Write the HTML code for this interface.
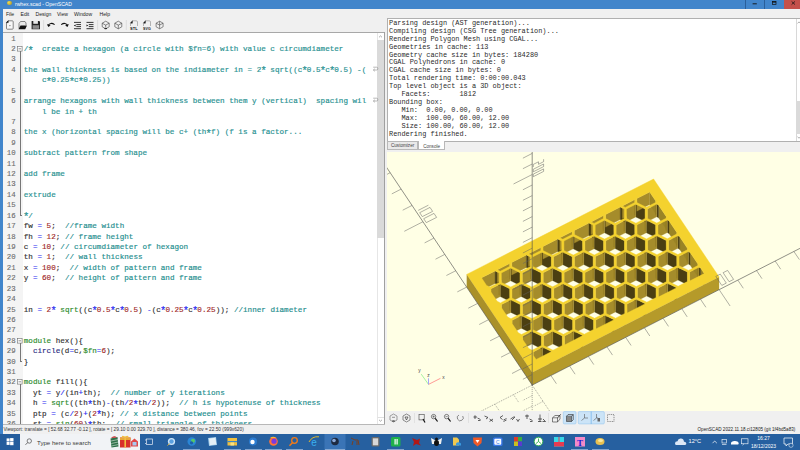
<!DOCTYPE html><html><head><meta charset="utf-8"><style>
*{margin:0;padding:0;box-sizing:border-box}
html,body{width:800px;height:450px;overflow:hidden;background:#f0f0f0;font-family:"Liberation Sans",sans-serif}
.a{position:absolute}
.mono{font-family:"Liberation Mono",monospace;white-space:pre}
#title{left:0;top:0;width:800px;height:9px;background:#4185cb}
#lstrip{left:0;top:9px;width:3px;height:425px;background:#4185cb}
#menu{left:3px;top:9px;width:797px;height:9px;background:#f0f0f0}
.mi{position:absolute;top:11.2px;font-size:5.1px;color:#1a1a1a;line-height:6px}
#editor{left:3px;top:31.8px;width:382px;height:392.5px;background:#fff;border-top:0.9px solid #a8a8a8;overflow:hidden}
#gutter{left:0;top:0;width:19.5px;height:392px;background:#f4f4f4}
.ln{position:absolute;text-align:right;font-family:"Liberation Mono",monospace;font-size:7.4px;color:#6a6a6a;line-height:8px;-webkit-text-stroke:0.1px #6a6a6a}
.cl{position:absolute;left:20.75px;font-family:"Liberation Mono",monospace;font-size:7.62px;line-height:8px;white-space:pre;color:#303030;-webkit-text-stroke:0.15px currentColor}
.cm{color:#208c8c}
.cb{color:#2a9292;-webkit-text-stroke:0.18px #2a9292}
.op{color:#2a2af0}
.st{display:inline-block;width:4.571px;font-size:10.5px;line-height:0;position:relative;top:2.6px;text-indent:-0.8px;overflow:visible}
.nu{color:#a02828}
.kw{color:#2a8a2a}
.fn{color:#2a2a80}
#console{left:387px;top:18px;width:413px;height:123.5px;background:#fff;border:0.8px solid #b0b0b0;border-right:none;overflow:hidden}
.co{position:absolute;left:1.0px;font-family:"Liberation Mono",monospace;font-size:6.92px;line-height:8px;white-space:pre;color:#2a2a2a}
#view{left:387px;top:151.7px;width:413px;height:259.3px;background:#ffffe5;overflow:hidden}
#status{left:3px;top:424.5px;width:797px;height:9.5px;background:#f0f0f0}
#taskbar{left:0;top:434px;width:800px;height:16px;background:#2660a0}
</style></head><body><div id="title" class="a"></div>
<div class="a" style="left:6.8px;top:0.6px;width:5.6px;height:4.4px;border-radius:2px;background:radial-gradient(circle at 35% 35%,#f0dc50,#a08a28)"></div>
<div class="a" style="left:15px;top:1.2px;font-size:5.1px;line-height:6px;color:#fff;white-space:pre">rwhex.scad - OpenSCAD</div>
<div class="a" style="left:745px;top:0;width:0.7px;height:9px;background:#2a5f9a"></div>
<div class="a" style="left:764.2px;top:0;width:0.7px;height:9px;background:#2a5f9a"></div>
<div class="a" style="left:784px;top:0;width:16px;height:9px;background:#c4504a"></div>
<svg class="a" style="left:745px;top:0" width="55" height="9" viewBox="745 0 55 9"><path d="M752.6,3.8 H756.8" stroke="#111" stroke-width="0.9"/><rect x="772.4" y="1.6" width="3.6" height="2.8" fill="none" stroke="#111" stroke-width="0.7"/><path d="M772.4,2 H776" stroke="#111" stroke-width="1.1"/><path d="M791.6,1.4 L795,4.6 M795,1.4 L791.6,4.6" stroke="#111" stroke-width="0.75"/></svg>
<div id="lstrip" class="a"></div>
<div id="menu" class="a"></div>
<div class="mi" style="left:6px">File</div>
<div class="mi" style="left:20.5px">Edit</div>
<div class="mi" style="left:35.5px">Design</div>
<div class="mi" style="left:57px">View</div>
<div class="mi" style="left:74px">Window</div>
<div class="mi" style="left:99.5px">Help</div>
<svg class="a" style="left:0;top:16px" width="170" height="16" viewBox="0 16 170 16">
<g fill="none" stroke-linejoin="round">
<path d="M8,20.8 H12.3 Q13.2,20.8 13.2,21.7 V28.4 Q13.2,29.2 12.3,29.2 H7.2 Q6.5,29.2 6.5,28.4 V22.4 Z" stroke="#6a6a6a" stroke-width="0.8" fill="#f8f8f8"/>
<path d="M6.5,22.6 L8.2,20.8 V22.6 Z" fill="#111" stroke="#111" stroke-width="0.6"/>
<circle cx="9.9" cy="25.6" r="0.7" fill="#777"/>
<path d="M19,28.5 V23.5 L20.5,21.5 H25 L26,23 V25" stroke="#6a6a6a" stroke-width="0.8" fill="#e8e8e8"/>
<path d="M18.5,29.2 L20.5,25.5 H27 L25.2,29.2 Z" fill="#111"/>
<path d="M31.6,21 H39.2 L40,21.8 V29.3 H31.6 Z" fill="#222"/>
<rect x="33.3" y="21" width="4.6" height="2.8" fill="#e8e8e8"/>
<rect x="32.6" y="25.2" width="6.5" height="3.6" fill="#8a8a8a"/>
<path d="M43.6,20 V30" stroke="#d0d0d0" stroke-width="0.6"/>
<path d="M48,25.6 Q50.5,21.8 54.6,24.6" stroke="#111" stroke-width="1.1"/>
<path d="M47,24 L48.3,26.9 L50.6,25.4 Z" fill="#111"/>
<path d="M67.8,25.6 Q65.3,21.8 61.2,24.6" stroke="#111" stroke-width="1.1"/>
<path d="M68.8,24 L67.5,26.9 L65.2,25.4 Z" fill="#111"/>
<path d="M74,22.4 H81 M76.3,24.6 H81 M76.3,26.6 H81 M74,28.7 H81" stroke="#222" stroke-width="0.9"/>
<path d="M73.8,25.6 L75.6,24.6 V26.6 Z" fill="#111"/>
<path d="M86.5,22.4 H93.5 M88.8,24.6 H93.5 M88.8,26.6 H93.5 M86.5,28.7 H93.5" stroke="#222" stroke-width="0.9"/>
<path d="M88.3,25.6 L86.5,24.6 V26.6 Z" fill="#111"/>
<path d="M97.6,20 V30" stroke="#d0d0d0" stroke-width="0.6"/>
<path d="M105.7,21.2 L109.2,23.2 V26.8 L105.7,28.8 L102.2,26.8 V23.2 Z M102.2,23.2 L105.7,25.1 L109.2,23.2 M105.7,25.1 V27.6" stroke="#3a3a3a" stroke-width="0.6"/>
<path d="M104.4,28.6 H107" stroke="#111" stroke-width="0.9"/>
<path d="M118.3,21.2 L121.8,23.2 V26.8 L118.3,28.8 L114.8,26.8 V23.2 Z M114.8,23.2 L118.3,25.1 L121.8,23.2 M118.3,25.1 V28.8" stroke="#3a3a3a" stroke-width="0.6"/>
<path d="M126.3,20 V30" stroke="#d0d0d0" stroke-width="0.6"/>
<path d="M132,20.8 H136.3 Q137.5,20.8 137.5,22 V26" stroke="#888" stroke-width="0.6"/>
<path d="M130.3,23.2 L132.4,20.8 V23.2 Z" fill="#111" stroke="#111" stroke-width="0.4"/>
<path d="M130.5,23.5 V26" stroke="#888" stroke-width="0.6"/>
<text x="130.1" y="29.5" font-family="Liberation Sans" font-size="3.4" font-weight="bold" fill="#111" textLength="7.6" lengthAdjust="spacingAndGlyphs">STL</text>
<path d="M145,20.8 H149.3 Q150.5,20.8 150.5,22 V26" stroke="#888" stroke-width="0.6"/>
<path d="M143.3,23.2 L145.4,20.8 V23.2 Z" fill="#111" stroke="#111" stroke-width="0.4"/>
<path d="M143.5,23.5 V26" stroke="#888" stroke-width="0.6"/>
<text x="143.1" y="29.5" font-family="Liberation Sans" font-size="3.4" font-weight="bold" fill="#111" textLength="7.6" lengthAdjust="spacingAndGlyphs">SVG</text>
<path d="M159.6,21.2 L163.1,23.2 V26.8 L159.6,28.8 L156.1,26.8 V23.2 Z M156.1,23.2 L159.6,25.1 L163.1,23.2 M159.6,21.2 V28.8" stroke="#444" stroke-width="0.6"/>
</g></svg>
<div id="editor" class="a">
<div id="gutter" class="a"></div>
</div>
<div class="a" style="left:3px;top:32.5px;width:374px;height:392px;overflow:hidden">
<div class="ln" style="left:0;top:2.10px;width:12.7px">1</div>
<div class="cl" style="top:2.10px"></div>
<div class="ln" style="left:0;top:12.52px;width:12.7px">2</div>
<div class="cl" style="top:12.52px"><span class="cb">/<span class="st">*</span>  create a hexagon (a circle with $fn=6) with value c circumdiameter</span></div>
<div class="ln" style="left:0;top:22.94px;width:12.7px">3</div>
<div class="cl" style="top:22.94px"></div>
<div class="ln" style="left:0;top:33.36px;width:12.7px">4</div>
<div class="cl" style="top:33.36px"><span class="cb">the wall thickness is based on the indiameter in = 2<span class="st">*</span> sqrt((c<span class="st">*</span>0.5<span class="st">*</span>c<span class="st">*</span>0.5) -( </span></div>
<div class="cl" style="top:43.78px"><span class="cb">    c<span class="st">*</span>0.25<span class="st">*</span>c<span class="st">*</span>0.25))</span></div>
<div class="ln" style="left:0;top:54.20px;width:12.7px">5</div>
<div class="cl" style="top:54.20px"></div>
<div class="ln" style="left:0;top:64.62px;width:12.7px">6</div>
<div class="cl" style="top:64.62px"><span class="cb">arrange hexagons with wall thickness between them y (vertical)  spacing wil</span></div>
<div class="cl" style="top:75.04px"><span class="cb">    l be in + th</span></div>
<div class="ln" style="left:0;top:85.46px;width:12.7px">7</div>
<div class="cl" style="top:85.46px"></div>
<div class="ln" style="left:0;top:95.88px;width:12.7px">8</div>
<div class="cl" style="top:95.88px"><span class="cb">the x (horizontal spacing will be c+ (th<span class="st">*</span>f) (f is a factor...</span></div>
<div class="ln" style="left:0;top:106.30px;width:12.7px">9</div>
<div class="cl" style="top:106.30px"></div>
<div class="ln" style="left:0;top:116.72px;width:12.7px">10</div>
<div class="cl" style="top:116.72px"><span class="cb">subtract pattern from shape</span></div>
<div class="ln" style="left:0;top:127.14px;width:12.7px">11</div>
<div class="cl" style="top:127.14px"></div>
<div class="ln" style="left:0;top:137.56px;width:12.7px">12</div>
<div class="cl" style="top:137.56px"><span class="cb">add frame</span></div>
<div class="ln" style="left:0;top:147.98px;width:12.7px">13</div>
<div class="cl" style="top:147.98px"></div>
<div class="ln" style="left:0;top:158.40px;width:12.7px">14</div>
<div class="cl" style="top:158.40px"><span class="cb">extrude</span></div>
<div class="ln" style="left:0;top:168.82px;width:12.7px">15</div>
<div class="cl" style="top:168.82px"></div>
<div class="ln" style="left:0;top:179.24px;width:12.7px">16</div>
<div class="cl" style="top:179.24px"><span class="cb"><span class="st">*</span>/</span></div>
<div class="ln" style="left:0;top:189.66px;width:12.7px">17</div>
<div class="cl" style="top:189.66px">fw <span class="op">=</span> <span class="nu">5</span>;  <span class="cm">//frame width</span></div>
<div class="ln" style="left:0;top:200.08px;width:12.7px">18</div>
<div class="cl" style="top:200.08px">fh <span class="op">=</span> <span class="nu">12</span>; <span class="cm">// frame height</span></div>
<div class="ln" style="left:0;top:210.50px;width:12.7px">19</div>
<div class="cl" style="top:210.50px">c <span class="op">=</span> <span class="nu">10</span>; <span class="cm">// circumdiameter of hexagon</span></div>
<div class="ln" style="left:0;top:220.92px;width:12.7px">20</div>
<div class="cl" style="top:220.92px">th <span class="op">=</span> <span class="nu">1</span>;  <span class="cm">// wall thickness</span></div>
<div class="ln" style="left:0;top:231.34px;width:12.7px">21</div>
<div class="cl" style="top:231.34px">x <span class="op">=</span> <span class="nu">100</span>;  <span class="cm">// width of pattern and frame</span></div>
<div class="ln" style="left:0;top:241.76px;width:12.7px">22</div>
<div class="cl" style="top:241.76px">y <span class="op">=</span> <span class="nu">60</span>;  <span class="cm">// height of pattern and frame</span></div>
<div class="ln" style="left:0;top:252.18px;width:12.7px">23</div>
<div class="cl" style="top:252.18px"></div>
<div class="ln" style="left:0;top:262.60px;width:12.7px">24</div>
<div class="cl" style="top:262.60px"></div>
<div class="ln" style="left:0;top:273.02px;width:12.7px">25</div>
<div class="cl" style="top:273.02px">in <span class="op">=</span> <span class="nu">2</span><span class="op"><span class="st">*</span></span> <span class="kw">sqrt</span>((c<span class="op"><span class="st">*</span></span><span class="nu">0.5</span><span class="op"><span class="st">*</span></span>c<span class="op"><span class="st">*</span></span><span class="nu">0.5</span>) <span class="op">-</span>(c<span class="op"><span class="st">*</span></span><span class="nu">0.25</span><span class="op"><span class="st">*</span></span>c<span class="op"><span class="st">*</span></span><span class="nu">0.25</span>)); <span class="cm">//inner diameter</span></div>
<div class="ln" style="left:0;top:283.44px;width:12.7px">26</div>
<div class="cl" style="top:283.44px"></div>
<div class="ln" style="left:0;top:293.86px;width:12.7px">27</div>
<div class="cl" style="top:293.86px"></div>
<div class="ln" style="left:0;top:304.28px;width:12.7px">28</div>
<div class="cl" style="top:304.28px"><span class="kw">module</span> hex(){</div>
<div class="ln" style="left:0;top:314.70px;width:12.7px">29</div>
<div class="cl" style="top:314.70px">  <span class="fn">circle</span>(d<span class="op">=</span>c,<span class="kw">$fn</span><span class="op">=</span><span class="nu">6</span>);</div>
<div class="ln" style="left:0;top:325.12px;width:12.7px">30</div>
<div class="cl" style="top:325.12px">}</div>
<div class="ln" style="left:0;top:335.54px;width:12.7px">31</div>
<div class="cl" style="top:335.54px"></div>
<div class="ln" style="left:0;top:345.96px;width:12.7px">32</div>
<div class="cl" style="top:345.96px"><span class="kw">module</span> fill(){</div>
<div class="ln" style="left:0;top:356.38px;width:12.7px">33</div>
<div class="cl" style="top:356.38px">  yt <span class="op">=</span> y<span class="op">/</span>(in<span class="op">+</span>th);  <span class="cm">// number of y iterations</span></div>
<div class="ln" style="left:0;top:366.80px;width:12.7px">34</div>
<div class="cl" style="top:366.80px">  h <span class="op">=</span> <span class="kw">sqrt</span>((th<span class="op"><span class="st">*</span></span>th)<span class="op">-</span>(th<span class="op">/</span><span class="nu">2</span><span class="op"><span class="st">*</span></span>th<span class="op">/</span><span class="nu">2</span>));  <span class="cm">// h is hypotenuse of thickness</span></div>
<div class="ln" style="left:0;top:377.22px;width:12.7px">35</div>
<div class="cl" style="top:377.22px">  ptp <span class="op">=</span> (c<span class="op">/</span><span class="nu">2</span>)<span class="op">+</span>(<span class="nu">2</span><span class="op"><span class="st">*</span></span>h); <span class="cm">// x distance between points</span></div>
<div class="ln" style="left:0;top:387.64px;width:12.7px">36</div>
<div class="cl" style="top:387.64px">  st <span class="op">=</span> <span class="kw">sin</span>(<span class="nu">60</span>)<span class="op"><span class="st">*</span></span>th;  <span class="cm">// small triangle of thickness</span></div>
</div>
<svg class="a" style="left:17.3px;top:45.92px" width="6" height="6" viewBox="0 0 6 6"><rect x="0.5" y="0.5" width="4.6" height="4.6" fill="#fff" stroke="#6c6c6c" stroke-width="0.6"/><path d="M1.5,2.8 H4.1" stroke="#333" stroke-width="0.55"/></svg>
<div class="a" style="left:19.6px;top:51.02px;width:0.7px;height:164.42px;background:#777"></div>
<div class="a" style="left:19.6px;top:215.44px;width:2.6px;height:0.7px;background:#777"></div>
<svg class="a" style="left:17.3px;top:337.68px" width="6" height="6" viewBox="0 0 6 6"><rect x="0.5" y="0.5" width="4.6" height="4.6" fill="#fff" stroke="#6c6c6c" stroke-width="0.6"/><path d="M1.5,2.8 H4.1" stroke="#333" stroke-width="0.55"/></svg>
<div class="a" style="left:19.6px;top:342.78px;width:0.7px;height:18.54px;background:#777"></div>
<div class="a" style="left:19.6px;top:361.32px;width:2.6px;height:0.7px;background:#777"></div>
<svg class="a" style="left:17.3px;top:379.36px" width="6" height="6" viewBox="0 0 6 6"><rect x="0.5" y="0.5" width="4.6" height="4.6" fill="#fff" stroke="#6c6c6c" stroke-width="0.6"/><path d="M1.5,2.8 H4.1" stroke="#333" stroke-width="0.55"/></svg>
<div class="a" style="left:19.6px;top:384.46px;width:0.7px;height:40.54px;background:#777"></div>
<div class="a" style="left:377.3px;top:32.7px;width:7px;height:391.5px;background:#fff;border-left:0.6px solid #e6e6e6"></div>
<div class="a" style="left:377.3px;top:39.5px;width:7px;height:198.8px;background:#dadada"></div>
<div class="a" style="left:384.3px;top:32.3px;width:1px;height:392px;background:#a0a0a0"></div>
<svg class="a" style="left:372px;top:66.06px" width="7" height="7" viewBox="0 0 7 7"><path d="M1.2,1.2 H4.6 Q5.8,1.2 5.8,2.6 Q5.8,4 4.6,4 H1.6 M2.8,2.8 L1.3,4 L2.8,5.3" fill="none" stroke="#8a8a8a" stroke-width="0.6"/></svg>
<svg class="a" style="left:372px;top:97.32px" width="7" height="7" viewBox="0 0 7 7"><path d="M1.2,1.2 H4.6 Q5.8,1.2 5.8,2.6 Q5.8,4 4.6,4 H1.6 M2.8,2.8 L1.3,4 L2.8,5.3" fill="none" stroke="#8a8a8a" stroke-width="0.6"/></svg>
<svg class="a" style="left:377.3px;top:32.7px" width="7" height="7" viewBox="0 0 7 7"><path d="M2,4.3 L3.5,2.9 L5,4.3" fill="none" stroke="#777" stroke-width="0.6"/></svg>
<div class="a" style="left:377.3px;top:417px;width:7px;height:7.2px;background:#fff;border-top:0.6px solid #e0e0e0;border-left:0.6px solid #e6e6e6"></div>
<svg class="a" style="left:377.3px;top:417px" width="7" height="7" viewBox="0 0 7 7"><path d="M2,2.8 L3.5,4.2 L5,2.8" fill="none" stroke="#777" stroke-width="0.6"/></svg>
<div class="a" style="left:3px;top:424px;width:382px;height:0.7px;background:#b8b8b8"></div>
<div id="console" class="a">
<div class="co" style="top:-0.20px">Parsing design (AST generation)...</div>
<div class="co" style="top:7.73px">Compiling design (CSG Tree generation)...</div>
<div class="co" style="top:15.66px">Rendering Polygon Mesh using CGAL...</div>
<div class="co" style="top:23.59px">Geometries in cache: 113</div>
<div class="co" style="top:31.52px">Geometry cache size in bytes: 184280</div>
<div class="co" style="top:39.45px">CGAL Polyhedrons in cache: 0</div>
<div class="co" style="top:47.38px">CGAL cache size in bytes: 0</div>
<div class="co" style="top:55.31px">Total rendering time: 0:00:00.043</div>
<div class="co" style="top:63.24px">Top level object is a 3D object:</div>
<div class="co" style="top:71.17px">   Facets:       1812</div>
<div class="co" style="top:79.10px">Bounding box:</div>
<div class="co" style="top:87.03px">   Min:  0.00, 0.00, 0.00</div>
<div class="co" style="top:94.96px">   Max:  100.00, 60.00, 12.00</div>
<div class="co" style="top:102.89px">   Size: 100.00, 60.00, 12.00</div>
<div class="co" style="top:110.82px">Rendering finished.</div>
</div>
<div class="a" style="left:795.5px;top:18.6px;width:4.5px;height:122px;background:#fff;border-left:0.6px solid #d8d8d8"></div>
<div class="a" style="left:795.8px;top:100.6px;width:4.2px;height:33px;background:#dadada"></div>
<svg class="a" style="left:795.5px;top:18.6px" width="5" height="7" viewBox="0 0 5 7"><path d="M1.5,4.3 L3,2.9 L4.5,4.3" fill="none" stroke="#777" stroke-width="0.6"/></svg>
<svg class="a" style="left:795.5px;top:133.8px" width="5" height="7" viewBox="0 0 5 7"><path d="M1.5,2.8 L3,4.2 L4.5,2.8" fill="none" stroke="#777" stroke-width="0.6"/></svg>
<div class="a" style="left:387.2px;top:141.3px;width:31px;height:8.3px;background:#e9e9e9;border:0.6px solid #b8b8b8"></div>
<div class="a" style="left:391px;top:143.3px;font-size:4.6px;line-height:5px;color:#444">Customizer</div>
<div class="a" style="left:418.2px;top:141.3px;width:26.7px;height:9.1px;background:#fff;border:0.6px solid #b8b8b8;border-top:none"></div>
<div class="a" style="left:423.2px;top:143.9px;font-size:4.6px;line-height:5px;color:#444">Console</div>
<div id="view" class="a"></div>
<svg class="a" style="left:387px;top:152px" width="413" height="259" viewBox="0 0 413 259">
<polygon points="164.6,199.6 155.5,195.1 155.5,207.7 164.6,212.2" fill="#4b3f12" stroke="#4b3f12" stroke-width="0.3"/>
<polygon points="155.5,195.1 146.2,199.9 146.2,212.5 155.5,207.7" fill="#a58c2b" stroke="#a58c2b" stroke-width="0.3"/>
<polygon points="154.4,193.5 154.4,184.0 154.4,196.7 154.4,206.1" fill="#8a7420" stroke="#8a7420" stroke-width="0.3"/>
<polygon points="154.4,184.0 145.0,179.3 145.0,192.0 154.4,196.7" fill="#4b3f12" stroke="#4b3f12" stroke-width="0.3"/>
<polygon points="145.0,179.3 135.6,184.1 135.6,196.7 145.0,192.0" fill="#a58c2b" stroke="#a58c2b" stroke-width="0.3"/>
<polygon points="143.9,177.7 143.8,168.2 143.8,180.9 143.9,190.3" fill="#8a7420" stroke="#8a7420" stroke-width="0.3"/>
<polygon points="143.8,168.2 134.4,163.6 134.4,176.2 143.8,180.9" fill="#4b3f12" stroke="#4b3f12" stroke-width="0.3"/>
<polygon points="134.4,163.6 125.1,168.3 125.1,181.0 134.4,176.2" fill="#a58c2b" stroke="#a58c2b" stroke-width="0.3"/>
<polygon points="133.3,161.9 133.3,152.5 133.3,165.1 133.3,174.6" fill="#8a7420" stroke="#8a7420" stroke-width="0.3"/>
<polygon points="133.3,152.5 123.9,147.8 123.9,160.4 133.3,165.1" fill="#4b3f12" stroke="#4b3f12" stroke-width="0.3"/>
<polygon points="123.9,147.8 114.5,152.5 114.5,165.2 123.9,160.4" fill="#a58c2b" stroke="#a58c2b" stroke-width="0.3"/>
<polygon points="122.8,146.1 122.7,136.7 122.7,149.3 122.8,158.8" fill="#8a7420" stroke="#8a7420" stroke-width="0.3"/>
<polygon points="122.7,136.7 113.3,132.0 113.3,144.6 122.7,149.3" fill="#4b3f12" stroke="#4b3f12" stroke-width="0.3"/>
<polygon points="113.3,132.0 104.0,136.8 104.0,149.4 113.3,144.6" fill="#a58c2b" stroke="#a58c2b" stroke-width="0.3"/>
<polygon points="108.1,118.9 94.5,125.8 94.5,138.5 108.1,131.5" fill="#a58c2b" stroke="#a58c2b" stroke-width="0.3"/>
<polygon points="112.2,130.4 112.2,120.9 112.2,133.5 112.2,143.0" fill="#8a7420" stroke="#8a7420" stroke-width="0.3"/>
<polygon points="112.2,120.9 108.1,118.9 108.1,131.5 112.2,133.5" fill="#4b3f12" stroke="#4b3f12" stroke-width="0.3"/>
<polygon points="175.3,183.9 165.9,179.2 165.9,191.9 175.3,196.6" fill="#4b3f12" stroke="#4b3f12" stroke-width="0.3"/>
<polygon points="165.9,179.2 156.5,184.0 156.5,196.6 165.9,191.9" fill="#a58c2b" stroke="#a58c2b" stroke-width="0.3"/>
<polygon points="175.4,193.4 175.3,183.9 175.3,196.6 175.4,206.0" fill="#8a7420" stroke="#8a7420" stroke-width="0.3"/>
<polygon points="164.7,168.1 155.3,163.5 155.3,176.1 164.7,180.8" fill="#4b3f12" stroke="#4b3f12" stroke-width="0.3"/>
<polygon points="155.3,163.5 146.0,168.2 146.0,180.9 155.3,176.1" fill="#a58c2b" stroke="#a58c2b" stroke-width="0.3"/>
<polygon points="164.8,177.6 164.7,168.1 164.7,180.8 164.8,190.2" fill="#8a7420" stroke="#8a7420" stroke-width="0.3"/>
<polygon points="154.2,152.4 144.8,147.7 144.8,160.3 154.2,165.0" fill="#4b3f12" stroke="#4b3f12" stroke-width="0.3"/>
<polygon points="144.8,147.7 135.4,152.5 135.4,165.1 144.8,160.3" fill="#a58c2b" stroke="#a58c2b" stroke-width="0.3"/>
<polygon points="154.2,161.8 154.2,152.4 154.2,165.0 154.2,174.5" fill="#8a7420" stroke="#8a7420" stroke-width="0.3"/>
<polygon points="143.6,136.6 134.2,131.9 134.2,144.5 143.6,149.2" fill="#4b3f12" stroke="#4b3f12" stroke-width="0.3"/>
<polygon points="134.2,131.9 124.9,136.7 124.9,149.3 134.2,144.5" fill="#a58c2b" stroke="#a58c2b" stroke-width="0.3"/>
<polygon points="143.7,146.0 143.6,136.6 143.6,149.2 143.7,158.7" fill="#8a7420" stroke="#8a7420" stroke-width="0.3"/>
<polygon points="133.1,120.8 123.7,116.1 123.7,128.8 133.1,133.4" fill="#4b3f12" stroke="#4b3f12" stroke-width="0.3"/>
<polygon points="123.7,116.1 114.3,120.9 114.3,133.5 123.7,128.8" fill="#a58c2b" stroke="#a58c2b" stroke-width="0.3"/>
<polygon points="133.1,130.3 133.1,120.8 133.1,133.4 133.1,142.9" fill="#8a7420" stroke="#8a7420" stroke-width="0.3"/>
<polygon points="122.6,111.5 110.3,117.8 110.3,130.4 122.6,124.1" fill="#a58c2b" stroke="#a58c2b" stroke-width="0.3"/>
<polygon points="122.6,114.5 122.6,111.5 122.6,124.1 122.6,127.1" fill="#8a7420" stroke="#8a7420" stroke-width="0.3"/>
<polygon points="195.8,183.6 186.8,179.1 186.8,191.8 195.8,196.3" fill="#4b3f12" stroke="#4b3f12" stroke-width="0.3"/>
<polygon points="186.8,179.1 177.5,183.9 177.5,196.5 186.8,191.8" fill="#a58c2b" stroke="#a58c2b" stroke-width="0.3"/>
<polygon points="185.7,168.0 176.3,163.4 176.3,176.0 185.7,180.7" fill="#4b3f12" stroke="#4b3f12" stroke-width="0.3"/>
<polygon points="176.3,163.4 166.9,168.1 166.9,180.8 176.3,176.0" fill="#a58c2b" stroke="#a58c2b" stroke-width="0.3"/>
<polygon points="185.7,177.5 185.7,168.0 185.7,180.7 185.7,190.1" fill="#8a7420" stroke="#8a7420" stroke-width="0.3"/>
<polygon points="175.1,152.3 165.7,147.6 165.7,160.2 175.1,164.9" fill="#4b3f12" stroke="#4b3f12" stroke-width="0.3"/>
<polygon points="165.7,147.6 156.4,152.4 156.4,165.0 165.7,160.2" fill="#a58c2b" stroke="#a58c2b" stroke-width="0.3"/>
<polygon points="175.2,161.7 175.1,152.3 175.1,164.9 175.2,174.4" fill="#8a7420" stroke="#8a7420" stroke-width="0.3"/>
<polygon points="164.6,136.5 155.1,131.8 155.1,144.4 164.6,149.1" fill="#4b3f12" stroke="#4b3f12" stroke-width="0.3"/>
<polygon points="155.1,131.8 145.8,136.6 145.8,149.2 155.1,144.4" fill="#a58c2b" stroke="#a58c2b" stroke-width="0.3"/>
<polygon points="164.6,145.9 164.6,136.5 164.6,149.1 164.6,158.6" fill="#8a7420" stroke="#8a7420" stroke-width="0.3"/>
<polygon points="154.0,120.7 144.6,116.0 144.6,128.7 154.0,133.3" fill="#4b3f12" stroke="#4b3f12" stroke-width="0.3"/>
<polygon points="144.6,116.0 135.3,120.8 135.3,133.4 144.6,128.7" fill="#a58c2b" stroke="#a58c2b" stroke-width="0.3"/>
<polygon points="154.1,130.2 154.0,120.7 154.0,133.3 154.1,142.8" fill="#8a7420" stroke="#8a7420" stroke-width="0.3"/>
<polygon points="139.4,102.9 124.7,110.4 124.7,123.0 139.4,115.5" fill="#a58c2b" stroke="#a58c2b" stroke-width="0.3"/>
<polygon points="143.5,114.4 143.4,104.9 143.4,117.6 143.5,127.0" fill="#8a7420" stroke="#8a7420" stroke-width="0.3"/>
<polygon points="143.4,104.9 139.4,102.9 139.4,115.5 143.4,117.6" fill="#4b3f12" stroke="#4b3f12" stroke-width="0.3"/>
<polygon points="206.6,168.0 197.2,163.3 197.2,175.9 206.6,180.6" fill="#4b3f12" stroke="#4b3f12" stroke-width="0.3"/>
<polygon points="197.2,163.3 187.8,168.0 187.8,180.7 197.2,175.9" fill="#a58c2b" stroke="#a58c2b" stroke-width="0.3"/>
<polygon points="206.6,177.4 206.6,168.0 206.6,180.6 206.6,190.0" fill="#8a7420" stroke="#8a7420" stroke-width="0.3"/>
<polygon points="196.0,152.2 186.6,147.5 186.6,160.1 196.0,164.8" fill="#4b3f12" stroke="#4b3f12" stroke-width="0.3"/>
<polygon points="186.6,147.5 177.3,152.3 177.3,164.9 186.6,160.1" fill="#a58c2b" stroke="#a58c2b" stroke-width="0.3"/>
<polygon points="196.1,161.6 196.0,152.2 196.0,164.8 196.1,174.3" fill="#8a7420" stroke="#8a7420" stroke-width="0.3"/>
<polygon points="185.5,136.4 176.1,131.7 176.1,144.3 185.5,149.0" fill="#4b3f12" stroke="#4b3f12" stroke-width="0.3"/>
<polygon points="176.1,131.7 166.7,136.5 166.7,149.1 176.1,144.3" fill="#a58c2b" stroke="#a58c2b" stroke-width="0.3"/>
<polygon points="185.5,145.9 185.5,136.4 185.5,149.0 185.5,158.5" fill="#8a7420" stroke="#8a7420" stroke-width="0.3"/>
<polygon points="174.9,120.6 165.5,115.9 165.5,128.6 174.9,133.3" fill="#4b3f12" stroke="#4b3f12" stroke-width="0.3"/>
<polygon points="165.5,115.9 156.2,120.7 156.2,133.3 165.5,128.6" fill="#a58c2b" stroke="#a58c2b" stroke-width="0.3"/>
<polygon points="175.0,130.1 174.9,120.6 174.9,133.3 175.0,142.7" fill="#8a7420" stroke="#8a7420" stroke-width="0.3"/>
<polygon points="164.4,104.8 155.0,100.2 155.0,112.8 164.4,117.5" fill="#4b3f12" stroke="#4b3f12" stroke-width="0.3"/>
<polygon points="155.0,100.2 145.6,104.9 145.6,117.6 155.0,112.8" fill="#a58c2b" stroke="#a58c2b" stroke-width="0.3"/>
<polygon points="164.4,114.3 164.4,104.8 164.4,117.5 164.4,126.9" fill="#8a7420" stroke="#8a7420" stroke-width="0.3"/>
<polygon points="153.8,95.5 141.5,101.8 141.5,114.4 153.8,108.2" fill="#a58c2b" stroke="#a58c2b" stroke-width="0.3"/>
<polygon points="153.9,98.5 153.8,95.5 153.8,108.2 153.9,111.2" fill="#8a7420" stroke="#8a7420" stroke-width="0.3"/>
<polygon points="227.1,167.7 218.1,163.2 218.1,175.8 227.1,180.3" fill="#4b3f12" stroke="#4b3f12" stroke-width="0.3"/>
<polygon points="218.1,163.2 208.7,167.9 208.7,180.6 218.1,175.8" fill="#a58c2b" stroke="#a58c2b" stroke-width="0.3"/>
<polygon points="216.9,152.1 207.5,147.4 207.5,160.0 216.9,164.7" fill="#4b3f12" stroke="#4b3f12" stroke-width="0.3"/>
<polygon points="207.5,147.4 198.2,152.2 198.2,164.8 207.5,160.0" fill="#a58c2b" stroke="#a58c2b" stroke-width="0.3"/>
<polygon points="217.0,161.5 216.9,152.1 216.9,164.7 217.0,174.2" fill="#8a7420" stroke="#8a7420" stroke-width="0.3"/>
<polygon points="206.4,136.3 197.0,131.6 197.0,144.2 206.4,148.9" fill="#4b3f12" stroke="#4b3f12" stroke-width="0.3"/>
<polygon points="197.0,131.6 187.6,136.4 187.6,149.0 197.0,144.2" fill="#a58c2b" stroke="#a58c2b" stroke-width="0.3"/>
<polygon points="206.4,145.8 206.4,136.3 206.4,148.9 206.4,158.4" fill="#8a7420" stroke="#8a7420" stroke-width="0.3"/>
<polygon points="195.8,120.5 186.4,115.8 186.4,128.5 195.8,133.2" fill="#4b3f12" stroke="#4b3f12" stroke-width="0.3"/>
<polygon points="186.4,115.8 177.1,120.6 177.1,133.2 186.4,128.5" fill="#a58c2b" stroke="#a58c2b" stroke-width="0.3"/>
<polygon points="195.9,130.0 195.8,120.5 195.8,133.2 195.9,142.6" fill="#8a7420" stroke="#8a7420" stroke-width="0.3"/>
<polygon points="185.3,104.7 175.9,100.1 175.9,112.7 185.3,117.4" fill="#4b3f12" stroke="#4b3f12" stroke-width="0.3"/>
<polygon points="175.9,100.1 166.5,104.8 166.5,117.5 175.9,112.7" fill="#a58c2b" stroke="#a58c2b" stroke-width="0.3"/>
<polygon points="185.3,114.2 185.3,104.7 185.3,117.4 185.3,126.8" fill="#8a7420" stroke="#8a7420" stroke-width="0.3"/>
<polygon points="170.7,86.9 156.0,94.4 156.0,107.1 170.7,99.6" fill="#a58c2b" stroke="#a58c2b" stroke-width="0.3"/>
<polygon points="174.8,98.4 174.7,89.0 174.7,101.6 174.8,111.1" fill="#8a7420" stroke="#8a7420" stroke-width="0.3"/>
<polygon points="174.7,89.0 170.7,86.9 170.7,99.6 174.7,101.6" fill="#4b3f12" stroke="#4b3f12" stroke-width="0.3"/>
<polygon points="237.8,152.0 228.4,147.3 228.4,159.9 237.8,164.6" fill="#4b3f12" stroke="#4b3f12" stroke-width="0.3"/>
<polygon points="228.4,147.3 219.1,152.1 219.1,164.7 228.4,159.9" fill="#a58c2b" stroke="#a58c2b" stroke-width="0.3"/>
<polygon points="237.9,161.4 237.8,152.0 237.8,164.6 237.9,174.1" fill="#8a7420" stroke="#8a7420" stroke-width="0.3"/>
<polygon points="227.3,136.2 217.9,131.5 217.9,144.2 227.3,148.8" fill="#4b3f12" stroke="#4b3f12" stroke-width="0.3"/>
<polygon points="217.9,131.5 208.5,136.3 208.5,148.9 217.9,144.2" fill="#a58c2b" stroke="#a58c2b" stroke-width="0.3"/>
<polygon points="227.4,145.7 227.3,136.2 227.3,148.8 227.4,158.3" fill="#8a7420" stroke="#8a7420" stroke-width="0.3"/>
<polygon points="216.7,120.4 207.3,115.7 207.3,128.4 216.7,133.1" fill="#4b3f12" stroke="#4b3f12" stroke-width="0.3"/>
<polygon points="207.3,115.7 198.0,120.5 198.0,133.1 207.3,128.4" fill="#a58c2b" stroke="#a58c2b" stroke-width="0.3"/>
<polygon points="216.8,129.9 216.7,120.4 216.7,133.1 216.8,142.5" fill="#8a7420" stroke="#8a7420" stroke-width="0.3"/>
<polygon points="206.2,104.6 196.8,100.0 196.8,112.6 206.2,117.3" fill="#4b3f12" stroke="#4b3f12" stroke-width="0.3"/>
<polygon points="196.8,100.0 187.4,104.7 187.4,117.4 196.8,112.6" fill="#a58c2b" stroke="#a58c2b" stroke-width="0.3"/>
<polygon points="206.2,114.1 206.2,104.6 206.2,117.3 206.2,126.7" fill="#8a7420" stroke="#8a7420" stroke-width="0.3"/>
<polygon points="195.6,88.9 186.2,84.2 186.2,96.8 195.6,101.5" fill="#4b3f12" stroke="#4b3f12" stroke-width="0.3"/>
<polygon points="186.2,84.2 176.9,89.0 176.9,101.6 186.2,96.8" fill="#a58c2b" stroke="#a58c2b" stroke-width="0.3"/>
<polygon points="195.7,98.3 195.6,88.9 195.6,101.5 195.7,111.0" fill="#8a7420" stroke="#8a7420" stroke-width="0.3"/>
<polygon points="185.1,79.6 172.8,85.8 172.8,98.5 185.1,92.2" fill="#a58c2b" stroke="#a58c2b" stroke-width="0.3"/>
<polygon points="185.1,82.6 185.1,79.6 185.1,92.2 185.1,95.2" fill="#8a7420" stroke="#8a7420" stroke-width="0.3"/>
<polygon points="258.4,151.7 249.4,147.2 249.4,159.8 258.4,164.3" fill="#4b3f12" stroke="#4b3f12" stroke-width="0.3"/>
<polygon points="249.4,147.2 240.0,152.0 240.0,164.6 249.4,159.8" fill="#a58c2b" stroke="#a58c2b" stroke-width="0.3"/>
<polygon points="248.2,136.1 238.8,131.4 238.8,144.1 248.2,148.7" fill="#4b3f12" stroke="#4b3f12" stroke-width="0.3"/>
<polygon points="238.8,131.4 229.5,136.2 229.5,148.8 238.8,144.1" fill="#a58c2b" stroke="#a58c2b" stroke-width="0.3"/>
<polygon points="248.3,145.6 248.2,136.1 248.2,148.7 248.3,158.2" fill="#8a7420" stroke="#8a7420" stroke-width="0.3"/>
<polygon points="237.7,120.3 228.3,115.6 228.3,128.3 237.7,133.0" fill="#4b3f12" stroke="#4b3f12" stroke-width="0.3"/>
<polygon points="228.3,115.6 218.9,120.4 218.9,133.1 228.3,128.3" fill="#a58c2b" stroke="#a58c2b" stroke-width="0.3"/>
<polygon points="237.7,129.8 237.7,120.3 237.7,133.0 237.7,142.4" fill="#8a7420" stroke="#8a7420" stroke-width="0.3"/>
<polygon points="227.1,104.6 217.7,99.9 217.7,112.5 227.1,117.2" fill="#4b3f12" stroke="#4b3f12" stroke-width="0.3"/>
<polygon points="217.7,99.9 208.4,104.6 208.4,117.3 217.7,112.5" fill="#a58c2b" stroke="#a58c2b" stroke-width="0.3"/>
<polygon points="227.2,114.0 227.1,104.6 227.1,117.2 227.2,126.6" fill="#8a7420" stroke="#8a7420" stroke-width="0.3"/>
<polygon points="216.6,88.8 207.1,84.1 207.1,96.7 216.6,101.4" fill="#4b3f12" stroke="#4b3f12" stroke-width="0.3"/>
<polygon points="207.1,84.1 197.8,88.9 197.8,101.5 207.1,96.7" fill="#a58c2b" stroke="#a58c2b" stroke-width="0.3"/>
<polygon points="216.6,98.2 216.6,88.8 216.6,101.4 216.6,110.9" fill="#8a7420" stroke="#8a7420" stroke-width="0.3"/>
<polygon points="201.9,71.0 187.3,78.5 187.3,91.1 201.9,83.6" fill="#a58c2b" stroke="#a58c2b" stroke-width="0.3"/>
<polygon points="206.1,82.5 206.0,73.0 206.0,85.6 206.1,95.1" fill="#8a7420" stroke="#8a7420" stroke-width="0.3"/>
<polygon points="206.0,73.0 201.9,71.0 201.9,83.6 206.0,85.6" fill="#4b3f12" stroke="#4b3f12" stroke-width="0.3"/>
<polygon points="269.1,136.0 259.7,131.3 259.7,144.0 269.1,148.6" fill="#4b3f12" stroke="#4b3f12" stroke-width="0.3"/>
<polygon points="259.7,131.3 250.4,136.1 250.4,148.7 259.7,144.0" fill="#a58c2b" stroke="#a58c2b" stroke-width="0.3"/>
<polygon points="269.2,145.5 269.1,136.0 269.1,148.6 269.2,158.1" fill="#8a7420" stroke="#8a7420" stroke-width="0.3"/>
<polygon points="258.6,120.2 249.2,115.5 249.2,128.2 258.6,132.9" fill="#4b3f12" stroke="#4b3f12" stroke-width="0.3"/>
<polygon points="249.2,115.5 239.8,120.3 239.8,133.0 249.2,128.2" fill="#a58c2b" stroke="#a58c2b" stroke-width="0.3"/>
<polygon points="258.6,129.7 258.6,120.2 258.6,132.9 258.6,142.3" fill="#8a7420" stroke="#8a7420" stroke-width="0.3"/>
<polygon points="248.0,104.5 238.6,99.8 238.6,112.4 248.0,117.1" fill="#4b3f12" stroke="#4b3f12" stroke-width="0.3"/>
<polygon points="238.6,99.8 229.3,104.5 229.3,117.2 238.6,112.4" fill="#a58c2b" stroke="#a58c2b" stroke-width="0.3"/>
<polygon points="248.1,113.9 248.0,104.5 248.0,117.1 248.1,126.6" fill="#8a7420" stroke="#8a7420" stroke-width="0.3"/>
<polygon points="237.5,88.7 228.1,84.0 228.1,96.6 237.5,101.3" fill="#4b3f12" stroke="#4b3f12" stroke-width="0.3"/>
<polygon points="228.1,84.0 218.7,88.8 218.7,101.4 228.1,96.6" fill="#a58c2b" stroke="#a58c2b" stroke-width="0.3"/>
<polygon points="237.5,98.1 237.5,88.7 237.5,101.3 237.5,110.8" fill="#8a7420" stroke="#8a7420" stroke-width="0.3"/>
<polygon points="226.9,72.9 217.5,68.2 217.5,80.8 226.9,85.5" fill="#4b3f12" stroke="#4b3f12" stroke-width="0.3"/>
<polygon points="217.5,68.2 208.2,73.0 208.2,85.6 217.5,80.8" fill="#a58c2b" stroke="#a58c2b" stroke-width="0.3"/>
<polygon points="227.0,82.4 226.9,72.9 226.9,85.5 227.0,95.0" fill="#8a7420" stroke="#8a7420" stroke-width="0.3"/>
<polygon points="216.4,63.6 204.1,69.9 204.1,82.5 216.4,76.2" fill="#a58c2b" stroke="#a58c2b" stroke-width="0.3"/>
<polygon points="216.4,66.6 216.4,63.6 216.4,76.2 216.4,79.2" fill="#8a7420" stroke="#8a7420" stroke-width="0.3"/>
<polygon points="289.7,135.7 280.6,131.2 280.6,143.9 289.7,148.4" fill="#4b3f12" stroke="#4b3f12" stroke-width="0.3"/>
<polygon points="280.6,131.2 271.3,136.0 271.3,148.6 280.6,143.9" fill="#a58c2b" stroke="#a58c2b" stroke-width="0.3"/>
<polygon points="279.5,120.1 270.1,115.5 270.1,128.1 279.5,132.8" fill="#4b3f12" stroke="#4b3f12" stroke-width="0.3"/>
<polygon points="270.1,115.5 260.7,120.2 260.7,132.9 270.1,128.1" fill="#a58c2b" stroke="#a58c2b" stroke-width="0.3"/>
<polygon points="279.5,129.6 279.5,120.1 279.5,132.8 279.5,142.2" fill="#8a7420" stroke="#8a7420" stroke-width="0.3"/>
<polygon points="268.9,104.4 259.5,99.7 259.5,112.3 268.9,117.0" fill="#4b3f12" stroke="#4b3f12" stroke-width="0.3"/>
<polygon points="259.5,99.7 250.2,104.4 250.2,117.1 259.5,112.3" fill="#a58c2b" stroke="#a58c2b" stroke-width="0.3"/>
<polygon points="269.0,113.8 268.9,104.4 268.9,117.0 269.0,126.5" fill="#8a7420" stroke="#8a7420" stroke-width="0.3"/>
<polygon points="258.4,88.6 249.0,83.9 249.0,96.5 258.4,101.2" fill="#4b3f12" stroke="#4b3f12" stroke-width="0.3"/>
<polygon points="249.0,83.9 239.6,88.7 239.6,101.3 249.0,96.5" fill="#a58c2b" stroke="#a58c2b" stroke-width="0.3"/>
<polygon points="258.4,98.0 258.4,88.6 258.4,101.2 258.4,110.7" fill="#8a7420" stroke="#8a7420" stroke-width="0.3"/>
<polygon points="247.8,72.8 238.4,68.1 238.4,80.8 247.8,85.4" fill="#4b3f12" stroke="#4b3f12" stroke-width="0.3"/>
<polygon points="238.4,68.1 229.1,72.9 229.1,85.5 238.4,80.8" fill="#a58c2b" stroke="#a58c2b" stroke-width="0.3"/>
<polygon points="247.9,82.3 247.8,72.8 247.8,85.4 247.9,94.9" fill="#8a7420" stroke="#8a7420" stroke-width="0.3"/>
<polygon points="233.2,55.0 218.6,62.5 218.6,75.1 233.2,67.6" fill="#a58c2b" stroke="#a58c2b" stroke-width="0.3"/>
<polygon points="237.3,66.5 237.3,57.0 237.3,69.7 237.3,79.1" fill="#8a7420" stroke="#8a7420" stroke-width="0.3"/>
<polygon points="237.3,57.0 233.2,55.0 233.2,67.6 237.3,69.7" fill="#4b3f12" stroke="#4b3f12" stroke-width="0.3"/>
<polygon points="300.4,120.0 291.0,115.4 291.0,128.0 300.4,132.7" fill="#4b3f12" stroke="#4b3f12" stroke-width="0.3"/>
<polygon points="291.0,115.4 281.6,120.1 281.6,132.8 291.0,128.0" fill="#a58c2b" stroke="#a58c2b" stroke-width="0.3"/>
<polygon points="300.5,129.5 300.4,120.0 300.4,132.7 300.5,142.1" fill="#8a7420" stroke="#8a7420" stroke-width="0.3"/>
<polygon points="289.8,104.3 280.4,99.6 280.4,112.2 289.8,116.9" fill="#4b3f12" stroke="#4b3f12" stroke-width="0.3"/>
<polygon points="280.4,99.6 271.1,104.4 271.1,117.0 280.4,112.2" fill="#a58c2b" stroke="#a58c2b" stroke-width="0.3"/>
<polygon points="289.9,113.7 289.8,104.3 289.8,116.9 289.9,126.4" fill="#8a7420" stroke="#8a7420" stroke-width="0.3"/>
<polygon points="279.3,88.5 269.9,83.8 269.9,96.4 279.3,101.1" fill="#4b3f12" stroke="#4b3f12" stroke-width="0.3"/>
<polygon points="269.9,83.8 260.5,88.6 260.5,101.2 269.9,96.4" fill="#a58c2b" stroke="#a58c2b" stroke-width="0.3"/>
<polygon points="279.4,97.9 279.3,88.5 279.3,101.1 279.4,110.6" fill="#8a7420" stroke="#8a7420" stroke-width="0.3"/>
<polygon points="268.7,72.7 259.3,68.0 259.3,80.7 268.7,85.3" fill="#4b3f12" stroke="#4b3f12" stroke-width="0.3"/>
<polygon points="259.3,68.0 250.0,72.8 250.0,85.4 259.3,80.7" fill="#a58c2b" stroke="#a58c2b" stroke-width="0.3"/>
<polygon points="268.8,82.2 268.7,72.7 268.7,85.3 268.8,94.8" fill="#8a7420" stroke="#8a7420" stroke-width="0.3"/>
<polygon points="258.2,56.9 248.8,52.2 248.8,64.9 258.2,69.6" fill="#4b3f12" stroke="#4b3f12" stroke-width="0.3"/>
<polygon points="248.8,52.2 239.4,57.0 239.4,69.7 248.8,64.9" fill="#a58c2b" stroke="#a58c2b" stroke-width="0.3"/>
<polygon points="258.2,66.4 258.2,56.9 258.2,69.6 258.2,79.0" fill="#8a7420" stroke="#8a7420" stroke-width="0.3"/>
<polygon points="247.7,47.6 235.4,53.9 235.4,66.5 247.7,60.3" fill="#a58c2b" stroke="#a58c2b" stroke-width="0.3"/>
<polygon points="247.7,50.6 247.7,47.6 247.7,60.3 247.7,63.2" fill="#8a7420" stroke="#8a7420" stroke-width="0.3"/>
<polygon points="317.3,121.6 313.7,116.1 313.7,128.8 317.3,134.2" fill="#9a8426" stroke="#9a8426" stroke-width="0.3"/>
<polygon points="313.7,116.1 311.9,115.3 311.9,127.9 313.7,128.8" fill="#4b3f12" stroke="#4b3f12" stroke-width="0.3"/>
<polygon points="311.9,115.3 302.6,120.0 302.6,132.7 311.9,127.9" fill="#a58c2b" stroke="#a58c2b" stroke-width="0.3"/>
<polygon points="310.8,111.8 303.1,100.4 303.1,113.0 310.8,124.5" fill="#9a8426" stroke="#9a8426" stroke-width="0.3"/>
<polygon points="303.1,100.4 301.4,99.5 301.4,112.1 303.1,113.0" fill="#4b3f12" stroke="#4b3f12" stroke-width="0.3"/>
<polygon points="301.4,99.5 292.0,104.3 292.0,116.9 301.4,112.1" fill="#a58c2b" stroke="#a58c2b" stroke-width="0.3"/>
<polygon points="310.8,113.6 310.8,111.8 310.8,124.5 310.8,126.3" fill="#8a7420" stroke="#8a7420" stroke-width="0.3"/>
<polygon points="300.3,96.1 292.6,84.6 292.6,97.2 300.3,108.7" fill="#9a8426" stroke="#9a8426" stroke-width="0.3"/>
<polygon points="292.6,84.6 290.8,83.7 290.8,96.3 292.6,97.2" fill="#4b3f12" stroke="#4b3f12" stroke-width="0.3"/>
<polygon points="290.8,83.7 281.5,88.5 281.5,101.1 290.8,96.3" fill="#a58c2b" stroke="#a58c2b" stroke-width="0.3"/>
<polygon points="300.3,97.8 300.3,96.1 300.3,108.7 300.3,110.5" fill="#8a7420" stroke="#8a7420" stroke-width="0.3"/>
<polygon points="289.7,80.3 282.0,68.8 282.0,81.5 289.7,92.9" fill="#9a8426" stroke="#9a8426" stroke-width="0.3"/>
<polygon points="282.0,68.8 280.3,67.9 280.3,80.6 282.0,81.5" fill="#4b3f12" stroke="#4b3f12" stroke-width="0.3"/>
<polygon points="280.3,67.9 270.9,72.7 270.9,85.3 280.3,80.6" fill="#a58c2b" stroke="#a58c2b" stroke-width="0.3"/>
<polygon points="289.7,82.1 289.7,80.3 289.7,92.9 289.7,94.7" fill="#8a7420" stroke="#8a7420" stroke-width="0.3"/>
<polygon points="279.2,64.5 271.5,53.0 271.5,65.7 279.2,77.1" fill="#9a8426" stroke="#9a8426" stroke-width="0.3"/>
<polygon points="271.5,53.0 269.7,52.1 269.7,64.8 271.5,65.7" fill="#4b3f12" stroke="#4b3f12" stroke-width="0.3"/>
<polygon points="269.7,52.1 260.4,56.9 260.4,69.6 269.7,64.8" fill="#a58c2b" stroke="#a58c2b" stroke-width="0.3"/>
<polygon points="279.2,66.3 279.2,64.5 279.2,77.1 279.2,78.9" fill="#8a7420" stroke="#8a7420" stroke-width="0.3"/>
<polygon points="268.6,48.7 262.7,39.9 262.7,52.6 268.6,61.4" fill="#9a8426" stroke="#9a8426" stroke-width="0.3"/>
<polygon points="262.7,39.9 249.8,46.5 249.8,59.2 262.7,52.6" fill="#a58c2b" stroke="#a58c2b" stroke-width="0.3"/>
<polygon points="268.6,50.5 268.6,48.7 268.6,61.4 268.6,63.2" fill="#8a7420" stroke="#8a7420" stroke-width="0.3"/>
<path d="M145.2,220.4 L332.1,125.0 L266.6,27.0 L79.7,122.4ZM146.2,199.9 L155.5,195.1 L164.6,199.6 L149.1,207.5 L146.2,203.2ZM135.6,184.1 L145.0,179.3 L154.4,184.0 L154.4,193.5 L145.1,198.2 L141.8,196.6 L135.6,187.4ZM125.1,168.3 L134.4,163.6 L143.8,168.2 L143.9,177.7 L134.5,182.5 L131.3,180.8 L125.1,171.6ZM114.5,152.5 L123.9,147.8 L133.3,152.5 L133.3,161.9 L124.0,166.7 L120.7,165.1 L114.5,155.8ZM104.0,136.8 L113.3,132.0 L122.7,136.7 L122.8,146.1 L113.4,150.9 L110.2,149.3 L104.0,140.0ZM112.2,120.9 L112.2,130.4 L102.9,135.1 L99.6,133.5 L94.5,125.8 L108.1,118.9ZM175.4,193.4 L166.0,198.2 L156.6,193.5 L156.5,184.0 L165.9,179.2 L175.3,183.9ZM164.8,177.6 L155.5,182.4 L146.0,177.7 L146.0,168.2 L155.3,163.5 L164.7,168.1ZM154.2,161.8 L144.9,166.6 L135.5,161.9 L135.4,152.5 L144.8,147.7 L154.2,152.4ZM143.7,146.0 L134.3,150.8 L124.9,146.1 L124.9,136.7 L134.2,131.9 L143.6,136.6ZM133.1,130.3 L123.8,135.0 L114.4,130.4 L114.3,120.9 L123.7,116.1 L133.1,120.8ZM122.6,114.5 L113.2,119.3 L110.3,117.8 L122.6,111.5ZM177.5,183.9 L186.8,179.1 L195.8,183.6 L177.5,193.0ZM185.7,177.5 L176.4,182.3 L167.0,177.6 L166.9,168.1 L176.3,163.4 L185.7,168.0ZM175.2,161.7 L165.8,166.5 L156.4,161.8 L156.4,152.4 L165.7,147.6 L175.1,152.3ZM164.6,145.9 L155.3,150.7 L145.9,146.0 L145.8,136.6 L155.1,131.8 L164.6,136.5ZM154.1,130.2 L144.7,134.9 L135.3,130.3 L135.3,120.8 L144.6,116.0 L154.0,120.7ZM143.4,104.9 L143.5,114.4 L134.2,119.2 L124.8,114.5 L124.7,110.4 L139.4,102.9ZM206.6,177.4 L197.3,182.2 L187.9,177.5 L187.8,168.0 L197.2,163.3 L206.6,168.0ZM196.1,161.6 L186.7,166.4 L177.3,161.7 L177.3,152.3 L186.6,147.5 L196.0,152.2ZM185.5,145.9 L176.2,150.6 L166.8,145.9 L166.7,136.5 L176.1,131.7 L185.5,136.4ZM175.0,130.1 L165.6,134.8 L156.2,130.2 L156.2,120.7 L165.5,115.9 L174.9,120.6ZM164.4,114.3 L155.1,119.1 L145.7,114.4 L145.6,104.9 L155.0,100.2 L164.4,104.8ZM153.9,98.5 L144.5,103.3 L141.5,101.8 L153.8,95.5ZM208.7,167.9 L218.1,163.2 L227.1,167.7 L208.8,177.0ZM217.0,161.5 L207.6,166.3 L198.2,161.6 L198.2,152.2 L207.5,147.4 L216.9,152.1ZM206.4,145.8 L197.1,150.5 L187.7,145.8 L187.6,136.4 L197.0,131.6 L206.4,136.3ZM195.9,130.0 L186.5,134.8 L177.1,130.1 L177.1,120.6 L186.4,115.8 L195.8,120.5ZM185.3,114.2 L176.0,119.0 L166.6,114.3 L166.5,104.8 L175.9,100.1 L185.3,104.7ZM174.7,89.0 L174.8,98.4 L165.4,103.2 L156.0,98.5 L156.0,94.4 L170.7,86.9ZM237.9,161.4 L228.6,166.2 L219.2,161.5 L219.1,152.1 L228.4,147.3 L237.8,152.0ZM227.4,145.7 L218.0,150.4 L208.6,145.7 L208.5,136.3 L217.9,131.5 L227.3,136.2ZM216.8,129.9 L207.5,134.7 L198.0,130.0 L198.0,120.5 L207.3,115.7 L216.7,120.4ZM206.2,114.1 L196.9,118.9 L187.5,114.2 L187.4,104.7 L196.8,100.0 L206.2,104.6ZM195.7,98.3 L186.3,103.1 L176.9,98.4 L176.9,89.0 L186.2,84.2 L195.6,88.9ZM185.1,82.6 L175.8,87.3 L172.8,85.8 L185.1,79.6ZM240.0,152.0 L249.4,147.2 L258.4,151.7 L240.1,161.1ZM248.3,145.6 L238.9,150.3 L229.5,145.7 L229.5,136.2 L238.8,131.4 L248.2,136.1ZM237.7,129.8 L228.4,134.6 L219.0,129.9 L218.9,120.4 L228.3,115.6 L237.7,120.3ZM227.2,114.0 L217.8,118.8 L208.4,114.1 L208.4,104.6 L217.7,99.9 L227.1,104.6ZM216.6,98.2 L207.3,103.0 L197.9,98.3 L197.8,88.9 L207.1,84.1 L216.6,88.8ZM206.0,73.0 L206.1,82.5 L196.7,87.2 L187.3,82.5 L187.3,78.5 L201.9,71.0ZM269.2,145.5 L259.8,150.2 L250.4,145.6 L250.4,136.1 L259.7,131.3 L269.1,136.0ZM258.6,129.7 L249.3,134.5 L239.9,129.8 L239.8,120.3 L249.2,115.5 L258.6,120.2ZM248.1,113.9 L238.7,118.7 L229.3,114.0 L229.3,104.5 L238.6,99.8 L248.0,104.5ZM237.5,98.1 L228.2,102.9 L218.8,98.2 L218.7,88.8 L228.1,84.0 L237.5,88.7ZM227.0,82.4 L217.6,87.1 L208.2,82.4 L208.2,73.0 L217.5,68.2 L226.9,72.9ZM216.4,66.6 L207.1,71.4 L204.1,69.9 L216.4,63.6ZM271.3,136.0 L280.6,131.2 L289.7,135.7 L271.3,145.1ZM279.5,129.6 L270.2,134.4 L260.8,129.7 L260.7,120.2 L270.1,115.5 L279.5,120.1ZM269.0,113.8 L259.6,118.6 L250.2,113.9 L250.2,104.4 L259.5,99.7 L268.9,104.4ZM258.4,98.0 L249.1,102.8 L239.7,98.1 L239.6,88.7 L249.0,83.9 L258.4,88.6ZM247.9,82.3 L238.5,87.0 L229.1,82.3 L229.1,72.9 L238.4,68.1 L247.8,72.8ZM237.3,57.0 L237.3,66.5 L228.0,71.3 L218.6,66.6 L218.6,62.5 L233.2,55.0ZM300.5,129.5 L291.1,134.3 L281.7,129.6 L281.6,120.1 L291.0,115.4 L300.4,120.0ZM289.9,113.7 L280.6,118.5 L271.2,113.8 L271.1,104.4 L280.4,99.6 L289.8,104.3ZM279.4,97.9 L270.0,102.7 L260.6,98.0 L260.5,88.6 L269.9,83.8 L279.3,88.5ZM268.8,82.2 L259.5,86.9 L250.1,82.3 L250.0,72.8 L259.3,68.0 L268.7,72.7ZM258.2,66.4 L248.9,71.2 L239.5,66.5 L239.4,57.0 L248.8,52.2 L258.2,56.9ZM247.7,50.6 L238.3,55.4 L235.4,53.9 L247.7,47.6ZM302.6,120.0 L311.9,115.3 L313.7,116.1 L317.3,121.6 L302.6,129.1ZM310.8,113.6 L301.5,118.4 L292.1,113.7 L292.0,104.3 L301.4,99.5 L303.1,100.4 L310.8,111.8ZM300.3,97.8 L290.9,102.6 L281.5,97.9 L281.5,88.5 L290.8,83.7 L292.6,84.6 L300.3,96.1ZM289.7,82.1 L280.4,86.8 L271.0,82.2 L270.9,72.7 L280.3,67.9 L282.0,68.8 L289.7,80.3ZM279.2,66.3 L269.8,71.1 L260.4,66.4 L260.4,56.9 L269.7,52.1 L271.5,53.0 L279.2,64.5ZM268.6,50.5 L259.3,55.3 L249.9,50.6 L249.8,46.5 L262.7,39.9 L268.6,48.7Z" fill="#f4d22e" fill-rule="evenodd" stroke="#f4d22e" stroke-width="0.45" stroke-linejoin="round"/>
<polygon points="145.2,220.4 332.1,125.0 332.1,137.6 145.2,233.1" fill="#b59a2a"/>
<polygon points="145.2,220.4 79.7,122.4 79.7,135.1 145.2,233.1" fill="#a99029"/>
<line x1="145.2" y1="233.1" x2="892.9" y2="-148.7" stroke="#474747" stroke-width="0.6" opacity="1.0"/>
<line x1="145.2" y1="233.1" x2="-291.7" y2="-420.2" stroke="#474747" stroke-width="0.6" opacity="1.0"/>
<line x1="145.2" y1="233.1" x2="145.2" y2="-188.1" stroke="#474747" stroke-width="0.6" opacity="1.0"/>
<line x1="145.2" y1="233.1" x2="-602.5" y2="614.8" stroke="#606060" stroke-width="0.55" stroke-dasharray="1,1" opacity="1.0"/>
<line x1="145.2" y1="233.1" x2="582.1" y2="886.4" stroke="#606060" stroke-width="0.55" stroke-dasharray="1,1" opacity="1.0"/>
<line x1="145.2" y1="233.1" x2="145.2" y2="654.2" stroke="#606060" stroke-width="0.55" stroke-dasharray="1,1" opacity="1.0"/>
<line x1="163.9" y1="223.5" x2="169.4" y2="231.7" stroke="#606060" stroke-width="0.5" opacity="1.0"/>
<line x1="134.3" y1="216.7" x2="125.0" y2="221.5" stroke="#606060" stroke-width="0.5" opacity="1.0"/>
<line x1="145.2" y1="222.5" x2="135.9" y2="227.3" stroke="#606060" stroke-width="0.5" opacity="1.0"/>
<line x1="126.5" y1="242.6" x2="132.0" y2="250.8" stroke="#606060" stroke-width="0.5" stroke-dasharray="1,1" opacity="1.0"/>
<line x1="156.1" y1="249.4" x2="146.8" y2="254.2" stroke="#606060" stroke-width="0.5" stroke-dasharray="1,1" opacity="1.0"/>
<line x1="145.2" y1="243.6" x2="135.9" y2="248.4" stroke="#606060" stroke-width="0.5" stroke-dasharray="1,1" opacity="1.0"/>
<line x1="182.6" y1="214.0" x2="188.1" y2="222.2" stroke="#606060" stroke-width="0.5" opacity="1.0"/>
<line x1="123.4" y1="200.4" x2="114.0" y2="205.2" stroke="#606060" stroke-width="0.5" opacity="1.0"/>
<line x1="145.2" y1="212.0" x2="135.9" y2="216.8" stroke="#606060" stroke-width="0.5" opacity="1.0"/>
<line x1="107.8" y1="252.2" x2="113.3" y2="260.3" stroke="#606060" stroke-width="0.5" stroke-dasharray="1,1" opacity="1.0"/>
<line x1="167.1" y1="265.7" x2="157.7" y2="270.5" stroke="#606060" stroke-width="0.5" stroke-dasharray="1,1" opacity="1.0"/>
<line x1="145.2" y1="254.1" x2="135.9" y2="258.9" stroke="#606060" stroke-width="0.5" stroke-dasharray="1,1" opacity="1.0"/>
<line x1="201.3" y1="204.4" x2="206.8" y2="212.6" stroke="#606060" stroke-width="0.5" opacity="1.0"/>
<line x1="112.5" y1="184.1" x2="103.1" y2="188.8" stroke="#606060" stroke-width="0.5" opacity="1.0"/>
<line x1="145.2" y1="201.5" x2="135.9" y2="206.3" stroke="#606060" stroke-width="0.5" opacity="1.0"/>
<line x1="89.1" y1="261.7" x2="94.6" y2="269.9" stroke="#606060" stroke-width="0.5" stroke-dasharray="1,1" opacity="1.0"/>
<line x1="178.0" y1="282.1" x2="168.6" y2="286.8" stroke="#606060" stroke-width="0.5" stroke-dasharray="1,1" opacity="1.0"/>
<line x1="145.2" y1="264.7" x2="135.9" y2="269.4" stroke="#606060" stroke-width="0.5" stroke-dasharray="1,1" opacity="1.0"/>
<line x1="220.0" y1="194.9" x2="225.5" y2="203.1" stroke="#606060" stroke-width="0.5" opacity="1.0"/>
<line x1="101.5" y1="167.7" x2="92.2" y2="172.5" stroke="#606060" stroke-width="0.5" opacity="1.0"/>
<line x1="145.2" y1="191.0" x2="135.9" y2="195.7" stroke="#606060" stroke-width="0.5" opacity="1.0"/>
<line x1="70.5" y1="271.3" x2="75.9" y2="279.4" stroke="#606060" stroke-width="0.5" stroke-dasharray="1,1" opacity="1.0"/>
<line x1="188.9" y1="298.4" x2="179.6" y2="303.2" stroke="#606060" stroke-width="0.5" stroke-dasharray="1,1" opacity="1.0"/>
<line x1="145.2" y1="275.2" x2="135.9" y2="280.0" stroke="#606060" stroke-width="0.5" stroke-dasharray="1,1" opacity="1.0"/>
<line x1="238.7" y1="185.4" x2="244.1" y2="193.5" stroke="#606060" stroke-width="0.5" opacity="1.0"/>
<line x1="90.6" y1="151.4" x2="81.3" y2="156.2" stroke="#606060" stroke-width="0.5" opacity="1.0"/>
<line x1="145.2" y1="180.4" x2="135.9" y2="185.2" stroke="#606060" stroke-width="0.5" opacity="1.0"/>
<line x1="51.8" y1="280.8" x2="57.2" y2="289.0" stroke="#606060" stroke-width="0.5" stroke-dasharray="1,1" opacity="1.0"/>
<line x1="199.8" y1="314.7" x2="190.5" y2="319.5" stroke="#606060" stroke-width="0.5" stroke-dasharray="1,1" opacity="1.0"/>
<line x1="145.2" y1="285.7" x2="135.9" y2="290.5" stroke="#606060" stroke-width="0.5" stroke-dasharray="1,1" opacity="1.0"/>
<line x1="257.4" y1="175.8" x2="262.8" y2="184.0" stroke="#606060" stroke-width="0.5" opacity="1.0"/>
<line x1="79.7" y1="135.1" x2="70.3" y2="139.9" stroke="#606060" stroke-width="0.5" opacity="1.0"/>
<line x1="145.2" y1="169.9" x2="135.9" y2="174.7" stroke="#606060" stroke-width="0.5" opacity="1.0"/>
<line x1="33.1" y1="290.3" x2="38.5" y2="298.5" stroke="#606060" stroke-width="0.5" stroke-dasharray="1,1" opacity="1.0"/>
<line x1="210.8" y1="331.1" x2="201.4" y2="335.8" stroke="#606060" stroke-width="0.5" stroke-dasharray="1,1" opacity="1.0"/>
<line x1="145.2" y1="296.3" x2="135.9" y2="301.0" stroke="#606060" stroke-width="0.5" stroke-dasharray="1,1" opacity="1.0"/>
<line x1="276.1" y1="166.3" x2="281.5" y2="174.4" stroke="#606060" stroke-width="0.5" opacity="1.0"/>
<line x1="68.8" y1="118.7" x2="59.4" y2="123.5" stroke="#606060" stroke-width="0.5" opacity="1.0"/>
<line x1="145.2" y1="159.4" x2="135.9" y2="164.1" stroke="#606060" stroke-width="0.5" opacity="1.0"/>
<line x1="14.4" y1="299.9" x2="19.8" y2="308.1" stroke="#606060" stroke-width="0.5" stroke-dasharray="1,1" opacity="1.0"/>
<line x1="221.7" y1="347.4" x2="212.3" y2="352.2" stroke="#606060" stroke-width="0.5" stroke-dasharray="1,1" opacity="1.0"/>
<line x1="145.2" y1="306.8" x2="135.9" y2="311.6" stroke="#606060" stroke-width="0.5" stroke-dasharray="1,1" opacity="1.0"/>
<line x1="294.8" y1="156.7" x2="300.2" y2="164.9" stroke="#606060" stroke-width="0.5" opacity="1.0"/>
<line x1="57.8" y1="102.4" x2="48.5" y2="107.2" stroke="#606060" stroke-width="0.5" opacity="1.0"/>
<line x1="145.2" y1="148.8" x2="135.9" y2="153.6" stroke="#606060" stroke-width="0.5" opacity="1.0"/>
<line x1="-4.3" y1="309.4" x2="1.1" y2="317.6" stroke="#606060" stroke-width="0.5" stroke-dasharray="1,1" opacity="1.0"/>
<line x1="232.6" y1="363.7" x2="223.3" y2="368.5" stroke="#606060" stroke-width="0.5" stroke-dasharray="1,1" opacity="1.0"/>
<line x1="145.2" y1="317.3" x2="135.9" y2="322.1" stroke="#606060" stroke-width="0.5" stroke-dasharray="1,1" opacity="1.0"/>
<line x1="313.5" y1="147.2" x2="318.9" y2="155.3" stroke="#606060" stroke-width="0.5" opacity="1.0"/>
<line x1="46.9" y1="86.1" x2="37.6" y2="90.9" stroke="#606060" stroke-width="0.5" opacity="1.0"/>
<line x1="145.2" y1="138.3" x2="135.9" y2="143.1" stroke="#606060" stroke-width="0.5" opacity="1.0"/>
<line x1="-23.0" y1="319.0" x2="-17.5" y2="327.1" stroke="#606060" stroke-width="0.5" stroke-dasharray="1,1" opacity="1.0"/>
<line x1="243.5" y1="380.1" x2="234.2" y2="384.8" stroke="#606060" stroke-width="0.5" stroke-dasharray="1,1" opacity="1.0"/>
<line x1="145.2" y1="327.8" x2="135.9" y2="332.6" stroke="#606060" stroke-width="0.5" stroke-dasharray="1,1" opacity="1.0"/>
<line x1="332.1" y1="137.6" x2="343.1" y2="154.0" stroke="#606060" stroke-width="0.5" opacity="1.0"/>
<line x1="36.0" y1="69.7" x2="17.3" y2="79.3" stroke="#606060" stroke-width="0.5" opacity="1.0"/>
<line x1="145.2" y1="127.8" x2="126.5" y2="137.3" stroke="#606060" stroke-width="0.5" opacity="1.0"/>
<line x1="-41.7" y1="328.5" x2="-30.8" y2="344.9" stroke="#606060" stroke-width="0.5" stroke-dasharray="1,1" opacity="1.0"/>
<line x1="254.5" y1="396.4" x2="235.8" y2="406.0" stroke="#606060" stroke-width="0.5" stroke-dasharray="1,1" opacity="1.0"/>
<line x1="145.2" y1="338.4" x2="126.5" y2="347.9" stroke="#606060" stroke-width="0.5" stroke-dasharray="1,1" opacity="1.0"/>
<line x1="350.8" y1="128.1" x2="356.3" y2="136.3" stroke="#606060" stroke-width="0.5" opacity="1.0"/>
<line x1="25.1" y1="53.4" x2="15.7" y2="58.2" stroke="#606060" stroke-width="0.5" opacity="1.0"/>
<line x1="145.2" y1="117.3" x2="135.9" y2="122.0" stroke="#606060" stroke-width="0.5" opacity="1.0"/>
<line x1="-60.4" y1="338.1" x2="-54.9" y2="346.2" stroke="#606060" stroke-width="0.5" stroke-dasharray="1,1" opacity="1.0"/>
<line x1="265.4" y1="412.7" x2="256.0" y2="417.5" stroke="#606060" stroke-width="0.5" stroke-dasharray="1,1" opacity="1.0"/>
<line x1="145.2" y1="348.9" x2="135.9" y2="353.7" stroke="#606060" stroke-width="0.5" stroke-dasharray="1,1" opacity="1.0"/>
<line x1="369.5" y1="118.5" x2="375.0" y2="126.7" stroke="#606060" stroke-width="0.5" opacity="1.0"/>
<line x1="14.1" y1="37.1" x2="4.8" y2="41.9" stroke="#606060" stroke-width="0.5" opacity="1.0"/>
<line x1="145.2" y1="106.7" x2="135.9" y2="111.5" stroke="#606060" stroke-width="0.5" opacity="1.0"/>
<line x1="-79.1" y1="347.6" x2="-73.6" y2="355.8" stroke="#606060" stroke-width="0.5" stroke-dasharray="1,1" opacity="1.0"/>
<line x1="276.3" y1="429.1" x2="267.0" y2="433.8" stroke="#606060" stroke-width="0.5" stroke-dasharray="1,1" opacity="1.0"/>
<line x1="145.2" y1="359.4" x2="135.9" y2="364.2" stroke="#606060" stroke-width="0.5" stroke-dasharray="1,1" opacity="1.0"/>
<line x1="388.2" y1="109.0" x2="393.7" y2="117.2" stroke="#606060" stroke-width="0.5" opacity="1.0"/>
<line x1="3.2" y1="20.7" x2="-6.1" y2="25.5" stroke="#606060" stroke-width="0.5" opacity="1.0"/>
<line x1="145.2" y1="96.2" x2="135.9" y2="101.0" stroke="#606060" stroke-width="0.5" opacity="1.0"/>
<line x1="-97.8" y1="357.2" x2="-92.3" y2="365.3" stroke="#606060" stroke-width="0.5" stroke-dasharray="1,1" opacity="1.0"/>
<line x1="287.2" y1="445.4" x2="277.9" y2="450.2" stroke="#606060" stroke-width="0.5" stroke-dasharray="1,1" opacity="1.0"/>
<line x1="145.2" y1="370.0" x2="135.9" y2="374.7" stroke="#606060" stroke-width="0.5" stroke-dasharray="1,1" opacity="1.0"/>
<line x1="406.9" y1="99.5" x2="412.4" y2="107.6" stroke="#606060" stroke-width="0.5" opacity="1.0"/>
<line x1="-7.7" y1="4.4" x2="-17.0" y2="9.2" stroke="#606060" stroke-width="0.5" opacity="1.0"/>
<line x1="145.2" y1="85.7" x2="135.9" y2="90.4" stroke="#606060" stroke-width="0.5" opacity="1.0"/>
<line x1="-116.5" y1="366.7" x2="-111.0" y2="374.9" stroke="#606060" stroke-width="0.5" stroke-dasharray="1,1" opacity="1.0"/>
<line x1="298.1" y1="461.7" x2="288.8" y2="466.5" stroke="#606060" stroke-width="0.5" stroke-dasharray="1,1" opacity="1.0"/>
<line x1="145.2" y1="380.5" x2="135.9" y2="385.3" stroke="#606060" stroke-width="0.5" stroke-dasharray="1,1" opacity="1.0"/>
<line x1="425.6" y1="89.9" x2="431.1" y2="98.1" stroke="#606060" stroke-width="0.5" opacity="1.0"/>
<line x1="-18.6" y1="-11.9" x2="-28.0" y2="-7.1" stroke="#606060" stroke-width="0.5" opacity="1.0"/>
<line x1="145.2" y1="75.1" x2="135.9" y2="79.9" stroke="#606060" stroke-width="0.5" opacity="1.0"/>
<line x1="-135.2" y1="376.2" x2="-129.7" y2="384.4" stroke="#606060" stroke-width="0.5" stroke-dasharray="1,1" opacity="1.0"/>
<line x1="309.1" y1="478.1" x2="299.7" y2="482.8" stroke="#606060" stroke-width="0.5" stroke-dasharray="1,1" opacity="1.0"/>
<line x1="145.2" y1="391.0" x2="135.9" y2="395.8" stroke="#606060" stroke-width="0.5" stroke-dasharray="1,1" opacity="1.0"/>
<line x1="444.3" y1="80.4" x2="449.8" y2="88.5" stroke="#606060" stroke-width="0.5" opacity="1.0"/>
<line x1="-29.5" y1="-28.3" x2="-38.9" y2="-23.5" stroke="#606060" stroke-width="0.5" opacity="1.0"/>
<line x1="145.2" y1="64.6" x2="135.9" y2="69.4" stroke="#606060" stroke-width="0.5" opacity="1.0"/>
<line x1="-153.9" y1="385.8" x2="-148.4" y2="394.0" stroke="#606060" stroke-width="0.5" stroke-dasharray="1,1" opacity="1.0"/>
<line x1="320.0" y1="494.4" x2="310.6" y2="499.2" stroke="#606060" stroke-width="0.5" stroke-dasharray="1,1" opacity="1.0"/>
<line x1="145.2" y1="401.5" x2="135.9" y2="406.3" stroke="#606060" stroke-width="0.5" stroke-dasharray="1,1" opacity="1.0"/>
<line x1="463.0" y1="70.8" x2="468.5" y2="79.0" stroke="#606060" stroke-width="0.5" opacity="1.0"/>
<line x1="-40.5" y1="-44.6" x2="-49.8" y2="-39.8" stroke="#606060" stroke-width="0.5" opacity="1.0"/>
<line x1="145.2" y1="54.1" x2="135.9" y2="58.9" stroke="#606060" stroke-width="0.5" opacity="1.0"/>
<line x1="-172.6" y1="395.3" x2="-167.1" y2="403.5" stroke="#606060" stroke-width="0.5" stroke-dasharray="1,1" opacity="1.0"/>
<line x1="330.9" y1="510.7" x2="321.6" y2="515.5" stroke="#606060" stroke-width="0.5" stroke-dasharray="1,1" opacity="1.0"/>
<line x1="145.2" y1="412.1" x2="135.9" y2="416.8" stroke="#606060" stroke-width="0.5" stroke-dasharray="1,1" opacity="1.0"/>
<line x1="481.7" y1="61.3" x2="487.1" y2="69.4" stroke="#606060" stroke-width="0.5" opacity="1.0"/>
<line x1="-51.4" y1="-60.9" x2="-60.7" y2="-56.1" stroke="#606060" stroke-width="0.5" opacity="1.0"/>
<line x1="145.2" y1="43.6" x2="135.9" y2="48.3" stroke="#606060" stroke-width="0.5" opacity="1.0"/>
<line x1="-191.2" y1="404.9" x2="-185.8" y2="413.0" stroke="#606060" stroke-width="0.5" stroke-dasharray="1,1" opacity="1.0"/>
<line x1="341.8" y1="527.1" x2="332.5" y2="531.8" stroke="#606060" stroke-width="0.5" stroke-dasharray="1,1" opacity="1.0"/>
<line x1="145.2" y1="422.6" x2="135.9" y2="427.4" stroke="#606060" stroke-width="0.5" stroke-dasharray="1,1" opacity="1.0"/>
<line x1="500.4" y1="51.7" x2="505.8" y2="59.9" stroke="#606060" stroke-width="0.5" opacity="1.0"/>
<line x1="-62.3" y1="-77.3" x2="-71.7" y2="-72.5" stroke="#606060" stroke-width="0.5" opacity="1.0"/>
<line x1="145.2" y1="33.0" x2="135.9" y2="37.8" stroke="#606060" stroke-width="0.5" opacity="1.0"/>
<line x1="-209.9" y1="414.4" x2="-204.5" y2="422.6" stroke="#606060" stroke-width="0.5" stroke-dasharray="1,1" opacity="1.0"/>
<line x1="352.8" y1="543.4" x2="343.4" y2="548.2" stroke="#606060" stroke-width="0.5" stroke-dasharray="1,1" opacity="1.0"/>
<line x1="145.2" y1="433.1" x2="135.9" y2="437.9" stroke="#606060" stroke-width="0.5" stroke-dasharray="1,1" opacity="1.0"/>
<line x1="519.1" y1="42.2" x2="530.0" y2="58.5" stroke="#606060" stroke-width="0.5" opacity="1.0"/>
<line x1="-73.2" y1="-93.6" x2="-91.9" y2="-84.0" stroke="#606060" stroke-width="0.5" opacity="1.0"/>
<line x1="145.2" y1="22.5" x2="126.5" y2="32.0" stroke="#606060" stroke-width="0.5" opacity="1.0"/>
<line x1="-228.6" y1="424.0" x2="-217.7" y2="440.3" stroke="#606060" stroke-width="0.5" stroke-dasharray="1,1" opacity="1.0"/>
<line x1="363.7" y1="559.7" x2="345.0" y2="569.3" stroke="#606060" stroke-width="0.5" stroke-dasharray="1,1" opacity="1.0"/>
<line x1="145.2" y1="443.7" x2="126.5" y2="453.2" stroke="#606060" stroke-width="0.5" stroke-dasharray="1,1" opacity="1.0"/>
<line x1="537.8" y1="32.6" x2="543.2" y2="40.8" stroke="#606060" stroke-width="0.5" opacity="1.0"/>
<line x1="-84.2" y1="-109.9" x2="-93.5" y2="-105.1" stroke="#606060" stroke-width="0.5" opacity="1.0"/>
<line x1="145.2" y1="12.0" x2="135.9" y2="16.7" stroke="#606060" stroke-width="0.5" opacity="1.0"/>
<line x1="-247.3" y1="433.5" x2="-241.9" y2="441.7" stroke="#606060" stroke-width="0.5" stroke-dasharray="1,1" opacity="1.0"/>
<line x1="374.6" y1="576.1" x2="365.3" y2="580.8" stroke="#606060" stroke-width="0.5" stroke-dasharray="1,1" opacity="1.0"/>
<line x1="145.2" y1="454.2" x2="135.9" y2="459.0" stroke="#606060" stroke-width="0.5" stroke-dasharray="1,1" opacity="1.0"/>
<line x1="556.5" y1="23.1" x2="561.9" y2="31.3" stroke="#606060" stroke-width="0.5" opacity="1.0"/>
<line x1="-95.1" y1="-126.3" x2="-104.4" y2="-121.5" stroke="#606060" stroke-width="0.5" opacity="1.0"/>
<line x1="145.2" y1="1.4" x2="135.9" y2="6.2" stroke="#606060" stroke-width="0.5" opacity="1.0"/>
<line x1="-266.0" y1="443.0" x2="-260.6" y2="451.2" stroke="#606060" stroke-width="0.5" stroke-dasharray="1,1" opacity="1.0"/>
<line x1="385.5" y1="592.4" x2="376.2" y2="597.2" stroke="#606060" stroke-width="0.5" stroke-dasharray="1,1" opacity="1.0"/>
<line x1="145.2" y1="464.7" x2="135.9" y2="469.5" stroke="#606060" stroke-width="0.5" stroke-dasharray="1,1" opacity="1.0"/>
<line x1="575.2" y1="13.6" x2="580.6" y2="21.7" stroke="#606060" stroke-width="0.5" opacity="1.0"/>
<line x1="-106.0" y1="-142.6" x2="-115.4" y2="-137.8" stroke="#606060" stroke-width="0.5" opacity="1.0"/>
<line x1="145.2" y1="-9.1" x2="135.9" y2="-4.3" stroke="#606060" stroke-width="0.5" opacity="1.0"/>
<line x1="-284.7" y1="452.6" x2="-279.2" y2="460.8" stroke="#606060" stroke-width="0.5" stroke-dasharray="1,1" opacity="1.0"/>
<line x1="396.5" y1="608.7" x2="387.1" y2="613.5" stroke="#606060" stroke-width="0.5" stroke-dasharray="1,1" opacity="1.0"/>
<line x1="145.2" y1="475.2" x2="135.9" y2="480.0" stroke="#606060" stroke-width="0.5" stroke-dasharray="1,1" opacity="1.0"/>
<line x1="593.8" y1="4.0" x2="599.3" y2="12.2" stroke="#606060" stroke-width="0.5" opacity="1.0"/>
<line x1="-116.9" y1="-158.9" x2="-126.3" y2="-154.1" stroke="#606060" stroke-width="0.5" opacity="1.0"/>
<line x1="145.2" y1="-19.6" x2="135.9" y2="-14.9" stroke="#606060" stroke-width="0.5" opacity="1.0"/>
<line x1="-303.4" y1="462.1" x2="-297.9" y2="470.3" stroke="#606060" stroke-width="0.5" stroke-dasharray="1,1" opacity="1.0"/>
<line x1="407.4" y1="625.1" x2="398.0" y2="629.8" stroke="#606060" stroke-width="0.5" stroke-dasharray="1,1" opacity="1.0"/>
<line x1="145.2" y1="485.8" x2="135.9" y2="490.5" stroke="#606060" stroke-width="0.5" stroke-dasharray="1,1" opacity="1.0"/>
<line x1="612.5" y1="-5.5" x2="618.0" y2="2.6" stroke="#606060" stroke-width="0.5" opacity="1.0"/>
<line x1="-127.9" y1="-175.2" x2="-137.2" y2="-170.5" stroke="#606060" stroke-width="0.5" opacity="1.0"/>
<line x1="145.2" y1="-30.2" x2="135.9" y2="-25.4" stroke="#606060" stroke-width="0.5" opacity="1.0"/>
<line x1="-322.1" y1="471.7" x2="-316.6" y2="479.8" stroke="#606060" stroke-width="0.5" stroke-dasharray="1,1" opacity="1.0"/>
<line x1="418.3" y1="641.4" x2="409.0" y2="646.2" stroke="#606060" stroke-width="0.5" stroke-dasharray="1,1" opacity="1.0"/>
<line x1="145.2" y1="496.3" x2="135.9" y2="501.1" stroke="#606060" stroke-width="0.5" stroke-dasharray="1,1" opacity="1.0"/>
<line x1="631.2" y1="-15.1" x2="636.7" y2="-6.9" stroke="#606060" stroke-width="0.5" opacity="1.0"/>
<line x1="-138.8" y1="-191.6" x2="-148.1" y2="-186.8" stroke="#606060" stroke-width="0.5" opacity="1.0"/>
<line x1="145.2" y1="-40.7" x2="135.9" y2="-35.9" stroke="#606060" stroke-width="0.5" opacity="1.0"/>
<line x1="-340.8" y1="481.2" x2="-335.3" y2="489.4" stroke="#606060" stroke-width="0.5" stroke-dasharray="1,1" opacity="1.0"/>
<line x1="429.2" y1="657.7" x2="419.9" y2="662.5" stroke="#606060" stroke-width="0.5" stroke-dasharray="1,1" opacity="1.0"/>
<line x1="145.2" y1="506.8" x2="135.9" y2="511.6" stroke="#606060" stroke-width="0.5" stroke-dasharray="1,1" opacity="1.0"/>
<line x1="649.9" y1="-24.6" x2="655.4" y2="-16.5" stroke="#606060" stroke-width="0.5" opacity="1.0"/>
<line x1="-149.7" y1="-207.9" x2="-159.0" y2="-203.1" stroke="#606060" stroke-width="0.5" opacity="1.0"/>
<line x1="145.2" y1="-51.2" x2="135.9" y2="-46.4" stroke="#606060" stroke-width="0.5" opacity="1.0"/>
<line x1="-359.5" y1="490.8" x2="-354.0" y2="498.9" stroke="#606060" stroke-width="0.5" stroke-dasharray="1,1" opacity="1.0"/>
<line x1="440.1" y1="674.1" x2="430.8" y2="678.8" stroke="#606060" stroke-width="0.5" stroke-dasharray="1,1" opacity="1.0"/>
<line x1="145.2" y1="517.4" x2="135.9" y2="522.1" stroke="#606060" stroke-width="0.5" stroke-dasharray="1,1" opacity="1.0"/>
<line x1="668.6" y1="-34.2" x2="674.1" y2="-26.0" stroke="#606060" stroke-width="0.5" opacity="1.0"/>
<line x1="-160.6" y1="-224.2" x2="-170.0" y2="-219.5" stroke="#606060" stroke-width="0.5" opacity="1.0"/>
<line x1="145.2" y1="-61.7" x2="135.9" y2="-57.0" stroke="#606060" stroke-width="0.5" opacity="1.0"/>
<line x1="-378.2" y1="500.3" x2="-372.7" y2="508.5" stroke="#606060" stroke-width="0.5" stroke-dasharray="1,1" opacity="1.0"/>
<line x1="451.1" y1="690.4" x2="441.7" y2="695.2" stroke="#606060" stroke-width="0.5" stroke-dasharray="1,1" opacity="1.0"/>
<line x1="145.2" y1="527.9" x2="135.9" y2="532.7" stroke="#606060" stroke-width="0.5" stroke-dasharray="1,1" opacity="1.0"/>
<line x1="687.3" y1="-43.7" x2="692.8" y2="-35.5" stroke="#606060" stroke-width="0.5" opacity="1.0"/>
<line x1="-171.5" y1="-240.6" x2="-180.9" y2="-235.8" stroke="#606060" stroke-width="0.5" opacity="1.0"/>
<line x1="145.2" y1="-72.3" x2="135.9" y2="-67.5" stroke="#606060" stroke-width="0.5" opacity="1.0"/>
<line x1="-396.9" y1="509.9" x2="-391.4" y2="518.0" stroke="#606060" stroke-width="0.5" stroke-dasharray="1,1" opacity="1.0"/>
<line x1="462.0" y1="706.7" x2="452.6" y2="711.5" stroke="#606060" stroke-width="0.5" stroke-dasharray="1,1" opacity="1.0"/>
<line x1="145.2" y1="538.4" x2="135.9" y2="543.2" stroke="#606060" stroke-width="0.5" stroke-dasharray="1,1" opacity="1.0"/>
<line x1="706.0" y1="-53.3" x2="716.9" y2="-36.9" stroke="#606060" stroke-width="0.5" opacity="1.0"/>
<line x1="-182.5" y1="-256.9" x2="-201.2" y2="-247.4" stroke="#606060" stroke-width="0.5" opacity="1.0"/>
<line x1="145.2" y1="-82.8" x2="126.5" y2="-73.3" stroke="#606060" stroke-width="0.5" opacity="1.0"/>
<line x1="-415.6" y1="519.4" x2="-404.6" y2="535.7" stroke="#606060" stroke-width="0.5" stroke-dasharray="1,1" opacity="1.0"/>
<line x1="472.9" y1="723.1" x2="454.2" y2="732.6" stroke="#606060" stroke-width="0.5" stroke-dasharray="1,1" opacity="1.0"/>
<line x1="145.2" y1="549.0" x2="126.5" y2="558.5" stroke="#606060" stroke-width="0.5" stroke-dasharray="1,1" opacity="1.0"/>
<line x1="724.7" y1="-62.8" x2="730.2" y2="-54.6" stroke="#606060" stroke-width="0.5" opacity="1.0"/>
<line x1="-193.4" y1="-273.2" x2="-202.7" y2="-268.5" stroke="#606060" stroke-width="0.5" opacity="1.0"/>
<line x1="145.2" y1="-93.3" x2="135.9" y2="-88.6" stroke="#606060" stroke-width="0.5" opacity="1.0"/>
<line x1="-434.2" y1="528.9" x2="-428.8" y2="537.1" stroke="#606060" stroke-width="0.5" stroke-dasharray="1,1" opacity="1.0"/>
<line x1="483.8" y1="739.4" x2="474.5" y2="744.2" stroke="#606060" stroke-width="0.5" stroke-dasharray="1,1" opacity="1.0"/>
<line x1="145.2" y1="559.5" x2="135.9" y2="564.3" stroke="#606060" stroke-width="0.5" stroke-dasharray="1,1" opacity="1.0"/>
<line x1="743.4" y1="-72.3" x2="748.8" y2="-64.2" stroke="#606060" stroke-width="0.5" opacity="1.0"/>
<line x1="-204.3" y1="-289.6" x2="-213.7" y2="-284.8" stroke="#606060" stroke-width="0.5" opacity="1.0"/>
<line x1="145.2" y1="-103.9" x2="135.9" y2="-99.1" stroke="#606060" stroke-width="0.5" opacity="1.0"/>
<line x1="-452.9" y1="538.5" x2="-447.5" y2="546.7" stroke="#606060" stroke-width="0.5" stroke-dasharray="1,1" opacity="1.0"/>
<line x1="494.8" y1="755.7" x2="485.4" y2="760.5" stroke="#606060" stroke-width="0.5" stroke-dasharray="1,1" opacity="1.0"/>
<line x1="145.2" y1="570.0" x2="135.9" y2="574.8" stroke="#606060" stroke-width="0.5" stroke-dasharray="1,1" opacity="1.0"/>
<line x1="762.1" y1="-81.9" x2="767.5" y2="-73.7" stroke="#606060" stroke-width="0.5" opacity="1.0"/>
<line x1="-215.2" y1="-305.9" x2="-224.6" y2="-301.1" stroke="#606060" stroke-width="0.5" opacity="1.0"/>
<line x1="145.2" y1="-114.4" x2="135.9" y2="-109.6" stroke="#606060" stroke-width="0.5" opacity="1.0"/>
<line x1="-471.6" y1="548.0" x2="-466.2" y2="556.2" stroke="#606060" stroke-width="0.5" stroke-dasharray="1,1" opacity="1.0"/>
<line x1="505.7" y1="772.1" x2="496.3" y2="776.8" stroke="#606060" stroke-width="0.5" stroke-dasharray="1,1" opacity="1.0"/>
<line x1="145.2" y1="580.5" x2="135.9" y2="585.3" stroke="#606060" stroke-width="0.5" stroke-dasharray="1,1" opacity="1.0"/>
<line x1="780.8" y1="-91.4" x2="786.2" y2="-83.3" stroke="#606060" stroke-width="0.5" opacity="1.0"/>
<line x1="-226.2" y1="-322.2" x2="-235.5" y2="-317.5" stroke="#606060" stroke-width="0.5" opacity="1.0"/>
<line x1="145.2" y1="-124.9" x2="135.9" y2="-120.1" stroke="#606060" stroke-width="0.5" opacity="1.0"/>
<line x1="-490.3" y1="557.6" x2="-484.9" y2="565.7" stroke="#606060" stroke-width="0.5" stroke-dasharray="1,1" opacity="1.0"/>
<line x1="516.6" y1="788.4" x2="507.3" y2="793.2" stroke="#606060" stroke-width="0.5" stroke-dasharray="1,1" opacity="1.0"/>
<line x1="145.2" y1="591.1" x2="135.9" y2="595.8" stroke="#606060" stroke-width="0.5" stroke-dasharray="1,1" opacity="1.0"/>
<line x1="799.5" y1="-101.0" x2="804.9" y2="-92.8" stroke="#606060" stroke-width="0.5" opacity="1.0"/>
<line x1="-237.1" y1="-338.6" x2="-246.4" y2="-333.8" stroke="#606060" stroke-width="0.5" opacity="1.0"/>
<line x1="145.2" y1="-135.4" x2="135.9" y2="-130.7" stroke="#606060" stroke-width="0.5" opacity="1.0"/>
<line x1="-509.0" y1="567.1" x2="-503.6" y2="575.3" stroke="#606060" stroke-width="0.5" stroke-dasharray="1,1" opacity="1.0"/>
<line x1="527.5" y1="804.7" x2="518.2" y2="809.5" stroke="#606060" stroke-width="0.5" stroke-dasharray="1,1" opacity="1.0"/>
<line x1="145.2" y1="601.6" x2="135.9" y2="606.4" stroke="#606060" stroke-width="0.5" stroke-dasharray="1,1" opacity="1.0"/>
<line x1="818.2" y1="-110.5" x2="823.6" y2="-102.4" stroke="#606060" stroke-width="0.5" opacity="1.0"/>
<line x1="-248.0" y1="-354.9" x2="-257.4" y2="-350.1" stroke="#606060" stroke-width="0.5" opacity="1.0"/>
<line x1="145.2" y1="-146.0" x2="135.9" y2="-141.2" stroke="#606060" stroke-width="0.5" opacity="1.0"/>
<line x1="-527.7" y1="576.7" x2="-522.2" y2="584.8" stroke="#606060" stroke-width="0.5" stroke-dasharray="1,1" opacity="1.0"/>
<line x1="538.5" y1="821.1" x2="529.1" y2="825.8" stroke="#606060" stroke-width="0.5" stroke-dasharray="1,1" opacity="1.0"/>
<line x1="145.2" y1="612.1" x2="135.9" y2="616.9" stroke="#606060" stroke-width="0.5" stroke-dasharray="1,1" opacity="1.0"/>
<line x1="836.8" y1="-120.1" x2="842.3" y2="-111.9" stroke="#606060" stroke-width="0.5" opacity="1.0"/>
<line x1="-258.9" y1="-371.2" x2="-268.3" y2="-366.5" stroke="#606060" stroke-width="0.5" opacity="1.0"/>
<line x1="145.2" y1="-156.5" x2="135.9" y2="-151.7" stroke="#606060" stroke-width="0.5" opacity="1.0"/>
<line x1="-546.4" y1="586.2" x2="-540.9" y2="594.4" stroke="#606060" stroke-width="0.5" stroke-dasharray="1,1" opacity="1.0"/>
<line x1="549.4" y1="837.4" x2="540.0" y2="842.2" stroke="#606060" stroke-width="0.5" stroke-dasharray="1,1" opacity="1.0"/>
<line x1="145.2" y1="622.7" x2="135.9" y2="627.4" stroke="#606060" stroke-width="0.5" stroke-dasharray="1,1" opacity="1.0"/>
<line x1="855.5" y1="-129.6" x2="861.0" y2="-121.4" stroke="#606060" stroke-width="0.5" opacity="1.0"/>
<line x1="-269.9" y1="-387.6" x2="-279.2" y2="-382.8" stroke="#606060" stroke-width="0.5" opacity="1.0"/>
<line x1="145.2" y1="-167.0" x2="135.9" y2="-162.3" stroke="#606060" stroke-width="0.5" opacity="1.0"/>
<line x1="-565.1" y1="595.8" x2="-559.6" y2="603.9" stroke="#606060" stroke-width="0.5" stroke-dasharray="1,1" opacity="1.0"/>
<line x1="560.3" y1="853.7" x2="551.0" y2="858.5" stroke="#606060" stroke-width="0.5" stroke-dasharray="1,1" opacity="1.0"/>
<line x1="145.2" y1="633.2" x2="135.9" y2="638.0" stroke="#606060" stroke-width="0.5" stroke-dasharray="1,1" opacity="1.0"/>
<line x1="874.2" y1="-139.1" x2="879.7" y2="-131.0" stroke="#606060" stroke-width="0.5" opacity="1.0"/>
<line x1="-280.8" y1="-403.9" x2="-290.1" y2="-399.1" stroke="#606060" stroke-width="0.5" opacity="1.0"/>
<line x1="145.2" y1="-177.6" x2="135.9" y2="-172.8" stroke="#606060" stroke-width="0.5" opacity="1.0"/>
<line x1="-583.8" y1="605.3" x2="-578.3" y2="613.5" stroke="#606060" stroke-width="0.5" stroke-dasharray="1,1" opacity="1.0"/>
<line x1="571.2" y1="870.1" x2="561.9" y2="874.8" stroke="#606060" stroke-width="0.5" stroke-dasharray="1,1" opacity="1.0"/>
<line x1="145.2" y1="643.7" x2="135.9" y2="648.5" stroke="#606060" stroke-width="0.5" stroke-dasharray="1,1" opacity="1.0"/>
<polyline points="31.2,58.4 41.4,53.2" fill="none" stroke="#606060" stroke-width="0.5"/><polyline points="32.7,60.7 35.3,64.6 45.6,59.4 43.0,55.4 32.7,60.7" fill="none" stroke="#606060" stroke-width="0.5"/><polyline points="36.7,66.7 39.3,70.6 49.6,65.4 47.0,61.4 36.7,66.7" fill="none" stroke="#606060" stroke-width="0.5"/>
<polyline points="156.6,7.2 156.6,9.7 151.5,12.3 151.5,9.8 146.3,12.4 146.3,15.0" fill="none" stroke="#606060" stroke-width="0.5"/><polyline points="146.3,17.3 146.3,19.8 156.6,14.6 156.6,12.0 146.3,17.3" fill="none" stroke="#606060" stroke-width="0.5"/><polyline points="146.3,22.1 146.3,24.7 156.6,19.4 156.6,16.9 146.3,22.1" fill="none" stroke="#606060" stroke-width="0.5"/>
<polyline points="334.8,133.4 339.3,131.1 333.3,122.1 328.8,124.4 334.8,133.4" fill="none" stroke="#606060" stroke-width="0.5"/><polyline points="342.1,129.7 346.6,127.4 340.6,118.4 336.1,120.7 342.1,129.7" fill="none" stroke="#606060" stroke-width="0.5"/>
<line x1="41.5" y1="232.4" x2="53.5" y2="226.3" stroke="#ff8080" stroke-width="0.8"/>
<line x1="41.5" y1="232.4" x2="34.2" y2="222.1" stroke="#90f090" stroke-width="0.8"/>
<line x1="41.5" y1="232.4" x2="41.5" y2="226.3" stroke="#9090ff" stroke-width="0.8"/>
<text x="56.5" y="227.0" font-family="Liberation Sans" font-size="4.8" fill="#444" text-anchor="middle">x</text>
<text x="32.5" y="220.0" font-family="Liberation Sans" font-size="4.8" fill="#444" text-anchor="middle">y</text>
<text x="41.5" y="225.3" font-family="Liberation Sans" font-size="4.8" fill="#444" text-anchor="middle">z</text>
</svg>
<svg class="a" style="left:386px;top:411px" width="414" height="13.5" viewBox="386 411 414 13.5">
<g fill="none" stroke="#333" stroke-width="0.6">
<path d="M393.5,414 L397,416 V420 L393.5,422 L390,420 V416 Z" stroke="#666"/><path d="M392.3,421 H394.7" stroke="#111" stroke-width="1"/><path d="M392,417.3 H395" stroke="#555"/>
<path d="M406.5,414 L410,416 V420 L406.5,422 L403,420 V416 Z" stroke="#444"/><path d="M405,417 H408 L406.5,420 Z" stroke="#222"/>
<path d="M414.5,413 V423" stroke="#d6d6d6"/>
<rect x="419" y="414.3" width="5.2" height="5.6" stroke="#444"/><path d="M423,419 L425,422.5" stroke="#111" stroke-width="1.2"/>
<circle cx="433.6" cy="416.6" r="2.2" stroke="#333"/><path d="M433.6,415.5 V417.7 M432.5,416.6 H434.7" stroke="#333" stroke-width="0.5"/><path d="M435.2,418.3 L437.6,421.5" stroke="#111" stroke-width="1.2"/>
<circle cx="446.6" cy="416.6" r="2.2" stroke="#333"/><path d="M445.5,416.6 H447.7" stroke="#333" stroke-width="0.5"/><path d="M448.2,418.3 L450.6,421.5" stroke="#111" stroke-width="1.2"/>
<path d="M462.7,416 A3,3 0 1 1 459,415" stroke="#444" stroke-width="0.6"/>
<path d="M468.5,413 V423" stroke="#d6d6d6"/>
<path d="M473.5,417 H477 M475,415.3 V419 M477.5,418 L480.5,419.5 M478,420.5 H480.5" stroke="#222" stroke-width="0.7"/>
<path d="M484.5,416 L488,417.5 L486,419 M489.5,419 L493,421.5 M493,419 L489.5,421.5" stroke="#222" stroke-width="0.7"/>
<path d="M500,417.5 L503,415.5 M500,417.5 L502.5,419.5 M503.5,420 L506.5,418.5 M503.5,421.5 L506.5,420" stroke="#222" stroke-width="0.7"/>
<path d="M510.5,419 L514.5,416.5 M512,420 L515,417 M516.5,419 L518,421.5 L519.5,419" stroke="#222" stroke-width="0.7"/>
<path d="M525,416 H529 M527,414.5 V419 M529.5,419 L532.5,420.5 M530,421.5 H532.5" stroke="#222" stroke-width="0.7"/>
<path d="M538,419 H542 M540,414.5 V421.5 M538,421.5 H541.5 M543,419 L545.5,421.5 M542.5,421.5 H545.5" stroke="#222" stroke-width="0.7"/>
<path d="M548.5,413 V423" stroke="#d6d6d6"/>
<path d="M552.5,417.8 H557.5 V422 H552.5 Z M552.5,417.8 L555,415.5 H560 L557.5,417.8 M560,415.5 V419 L557.5,422 M557.5,417.8 L561,414" stroke="#333"/>
</g>
<rect x="563.3" y="411.6" width="12.7" height="12.3" rx="1" fill="#cce4f7" stroke="#99c8ee" stroke-width="0.6"/>
<rect x="578.3" y="411.6" width="26" height="12.3" rx="1" fill="#cce4f7" stroke="#99c8ee" stroke-width="0.6"/>
<path d="M591.2,411.6 V423.9" stroke="#4a9ae0" stroke-width="0.5"/>
<g fill="none" stroke="#333" stroke-width="0.6">
<path d="M566.5,416.3 H571.5 V421.5 H566.5 Z M566.5,416.3 L568,414.6 H573.2 L571.5,416.3 M573.2,414.6 V419.8 L571.5,421.5" stroke="#333" stroke-width="0.7"/>
<rect x="567" y="416.8" width="4" height="4.2" fill="#888" stroke="none"/>
<path d="M584.5,414 V418 L581.5,420.5 M584.5,418 H588" stroke="#555"/>
<path d="M596.5,414 V418 L593.5,420.5 M596.5,418 H598" stroke="#555"/><rect x="597.5" y="418" width="2.5" height="3.5" fill="#666" stroke="none"/>
<path d="M607.5,414.5 H614 V421.5 H607.5 Z" stroke="#444" stroke-dasharray="1,0.8"/>
</g></svg>
<div id="status" class="a"></div>
<div class="a" style="left:3.5px;top:427.2px;font-size:4.75px;line-height:5px;color:#333;white-space:pre">Viewport: translate = [ 52.68 32.77 -0.12 ], rotate = [ 29.10 0.00 329.70 ], distance = 380.46, fov = 22.50 (999x620)</div>
<div class="a" style="left:697.5px;top:427px;font-size:4.62px;line-height:5px;color:#222;white-space:pre">OpenSCAD 2022.11.18.ci12805 (git 1f4bd5a83)</div>
<div id="taskbar" class="a"></div>
<div class="a" style="left:0;top:434px;width:20px;height:16px;background:#245d9d"></div>
<div class="a" style="left:20px;top:434px;width:120px;height:16px;background:#f1f3f6"></div>
<div class="a" style="left:37px;top:438.6px;font-size:6.1px;line-height:7px;color:#3a3a3a">Type here to search</div>
<svg class="a" style="left:0;top:434px" width="800" height="16" viewBox="0 434 800 16">
<g fill="#fff"><rect x="6.6" y="438.4" width="3" height="3"/><rect x="10.1" y="438.1" width="3.4" height="3.3"/><rect x="6.6" y="441.9" width="3" height="3"/><rect x="10.1" y="441.9" width="3.4" height="3.3"/></g>
<circle cx="29.3" cy="441" r="2.2" fill="none" stroke="#333" stroke-width="0.6"/><path d="M27.7,442.6 L25.5,444.8" stroke="#333" stroke-width="0.7"/>
<path d="M110.5,438.5 L117.5,437 L118.5,446.5 L111.5,447.5 Z" fill="#2d7048"/><path d="M111,441 L118,439.5 M111.3,443.5 L118.2,442 M111.6,446 L118.4,444.5" stroke="#dde8e0" stroke-width="0.6"/><path d="M111,438 Q114,434.8 117,437.5" fill="#c83030"/>
<rect x="120" y="437.5" width="10.5" height="10" fill="#d8302a"/><rect x="120" y="437.5" width="10.5" height="2.5" fill="#e8a838"/><rect x="124.4" y="437.5" width="1.6" height="10" fill="#f0c040"/><path d="M122,437.5 Q121,434.5 125,436.5 Q129,434.5 128.5,437.5" fill="#f0c040"/>
<path d="M131,441.5 L134.5,438.5 L138,441.5 V446.5 H131 Z" fill="#e04848"/><rect x="132.5" y="442" width="4" height="3.5" fill="#a8c8f0"/>
<g fill="none" stroke="#e6ecf5" stroke-width="0.7"><rect x="146.5" y="439" width="6" height="5.5"/><path d="M146,440 H145 M146,443.5 H145"/></g>
<circle cx="171.5" cy="441.5" r="3.6" fill="#cfe6fa"/><circle cx="171.5" cy="441.5" r="2.2" fill="#5aa0e0"/><path d="M167.5,445.5 L169.5,443.5" stroke="#e0b030" stroke-width="1"/>
<circle cx="191.8" cy="441.5" r="4.3" fill="#2a86d6"/><circle cx="193" cy="440.8" r="2" fill="#56c766"/><circle cx="191.5" cy="442.8" r="1.6" fill="#1c5fa8"/>
<path d="M208,438 L216,437 L217,445 L209,446 Z" fill="#9ec9e8"/><path d="M209,438.5 L215.5,437.8 L216.3,444.6 L209.8,445.3 Z" fill="#e4eff7"/>
<rect x="227.5" y="438" width="9.5" height="7.5" fill="#f0c040"/><rect x="227.5" y="441" width="9.5" height="1.2" fill="#3a86c8"/><rect x="230.5" y="442.5" width="3.5" height="3" fill="#f8e080"/>
<circle cx="253" cy="441.5" r="4" fill="#2b7bd0"/><circle cx="252.5" cy="442" r="2.2" fill="#fff"/>
<circle cx="273.5" cy="441.5" r="4.3" fill="#ff7139"/><circle cx="274" cy="441.2" r="2.6" fill="#7a3ae0"/><path d="M270,438 Q273,435.5 276.5,438" fill="#ffb830"/>
<circle cx="294.5" cy="440.5" r="2.8" fill="none" stroke="#f07a1a" stroke-width="1.3"/><path d="M292.6,442.6 L289.5,445.8" stroke="#f07a1a" stroke-width="1.5"/>
<text x="314" y="446" font-family="Liberation Sans" font-size="10" fill="#3ab0f0" text-anchor="middle">e</text><path d="M309,442 Q312,436 319,436.8" fill="none" stroke="#f0c020" stroke-width="0.9"/>
<rect x="324.5" y="434" width="21" height="16" fill="#3a74b6"/>
<circle cx="335" cy="441.5" r="3.8" fill="#1d2a40"/><circle cx="334" cy="440.5" r="1.8" fill="#8aa8d8"/>
<path d="M351,438 L355,440 L358,440 L359,445 M353,441 L352,445 M357,441 L357,445" stroke="#7a4020" stroke-width="1" fill="none"/>
<rect x="371.5" y="437" width="8" height="9.5" rx="1" fill="#6a6a6a"/><rect x="372.8" y="438.3" width="5.4" height="7" fill="#d8d8d8"/>
<rect x="391" y="437" width="9.5" height="9.5" rx="1.5" fill="#1fb04a"/><rect x="394.5" y="439" width="1.2" height="5.5" fill="#fff"/><rect x="396.5" y="439" width="1.2" height="5.5" fill="#fff"/>
<path d="M412,438 L417,440 L420,438.5 L419,443 L421,445.5 L416,444 L413,446 L414,442 Z" fill="#b01818"/>
<path d="M431,438 L436.5,441 L442,438 L441,444 L432,444 Z" fill="#f0f0f0"/><ellipse cx="436.5" cy="443" rx="2.5" ry="3" fill="#111"/><circle cx="436.5" cy="439" r="1.5" fill="#111"/>
<path d="M453,437.5 H457 L459,439.5 V445.5 H453 Z" fill="#f0c850"/><path d="M456,443.5 Q458,441 461,443.5 V445.5 H456 Z" fill="#3a9ae0"/>
<path d="M473,437.5 H482 L481.5,443 L477.5,446.5 L473.5,443 Z" fill="#f05a28"/><path d="M475.5,440 H479.5 L477.5,443 Z" fill="#fff"/>
<rect x="493" y="437.5" width="9.5" height="8.5" rx="1.5" fill="#3a78e8"/><rect x="494.3" y="438.8" width="6.9" height="5.9" rx="1" fill="#f8fbff"/><text x="497.8" y="444" font-family="Liberation Sans" font-size="5" fill="#3a78e8" text-anchor="middle">C</text>
<rect x="514" y="437" width="4" height="4.5" fill="#e03a2a"/><rect x="518" y="437" width="4" height="4.5" fill="#3ab040"/><rect x="514" y="441.5" width="4" height="4.5" fill="#c8c020"/><rect x="518" y="441.5" width="4" height="4.5" fill="#5a3ad0"/>
<circle cx="538.5" cy="441.5" r="4.3" fill="#fff"/><circle cx="538.5" cy="441.5" r="4.3" fill="none" stroke="#2bb04a" stroke-width="0.9"/><path d="M538.5,441.5 V438.5 M538.5,441.5 L536,443.5 M538.5,441.5 L541,443.5" stroke="#2bb04a" stroke-width="0.9"/>
<rect x="554" y="437" width="10" height="9.5" fill="#38d8e8"/><rect x="554" y="442" width="10" height="4.5" fill="#e83a50"/><rect x="558.5" y="437" width="1" height="6" fill="#e83a50"/>
<rect x="575" y="437" width="10" height="9.5" fill="#f48ac8"/><text x="580" y="445.5" font-family="Liberation Serif" font-size="9" font-weight="bold" fill="#1a1ad8" text-anchor="middle">T</text>
<ellipse cx="600" cy="441.5" rx="4.5" ry="3.5" fill="#e8c050"/><ellipse cx="600.5" cy="440.5" rx="2.5" ry="1.5" fill="#f8e8a0"/>
<g fill="#a8c0e0" opacity="0.9"><rect x="183" y="449.2" width="17" height="0.8"/><rect x="224" y="449.2" width="17" height="0.8"/><rect x="245" y="449.2" width="17" height="0.8"/><rect x="265" y="449.2" width="17" height="0.8"/><rect x="286" y="449.2" width="17" height="0.8"/><rect x="325" y="449.2" width="20" height="0.8"/><rect x="387" y="449.2" width="17" height="0.8"/><rect x="571" y="449.2" width="17" height="0.8"/><rect x="592" y="449.2" width="17" height="0.8"/></g>
<path d="M676,445 H685 Q686.5,445 686.3,443.3 Q686,441.5 684,441.7 Q683.5,438.3 680.5,438.6 Q678,438.8 677.5,441.3 Q675,441.3 675,443.2 Q675,445 676,445 Z" fill="#dce8f6"/>
<path d="M712.5,443.2 L714.7,441 L716.9,443.2" fill="none" stroke="#fff" stroke-width="0.7"/>
<rect x="722" y="439.5" width="4.5" height="3.5" fill="none" stroke="#fff" stroke-width="0.6"/><path d="M722,444.5 H726.5" stroke="#fff" stroke-width="0.6"/>
<path d="M731,444.5 H738 Q739,444.5 738.6,442.8 Q738,440.8 734.5,441 Q731.2,441.2 731,443.2 Z" fill="#fff"/>
<rect x="741.5" y="438.8" width="6.5" height="5" fill="none" stroke="#fff" stroke-width="0.6"/><path d="M742.5,445.2 L744,443.8" stroke="#fff" stroke-width="0.6"/>
<path d="M784,438 H792.5 V444 H788 L786,446 V444 H784 Z" fill="none" stroke="#fff" stroke-width="0.7"/><circle cx="791" cy="445.3" r="2.1" fill="#2660a0" stroke="#fff" stroke-width="0.5"/>
</svg>
<div class="a" style="left:749px;top:435.3px;font-size:5px;line-height:7.2px;color:#fff;text-align:center;width:29px">16:27<br>18/12/2023</div>
<div class="a" style="left:688.6px;top:438.4px;font-size:5.6px;line-height:7px;color:#fff">12°C</div></body></html>
